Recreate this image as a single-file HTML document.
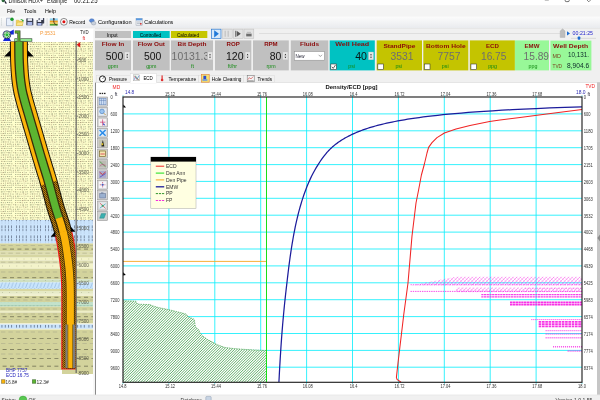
<!DOCTYPE html><html><head><meta charset="utf-8"><title>Drillsoft HDX+ Example</title><style>html,body{margin:0;padding:0;background:#f0f0f0;overflow:hidden}body{width:600px;height:400px;font-family:"Liberation Sans",sans-serif}</style></head><body><svg width="600" height="400" viewBox="0 0 600 400" font-family="Liberation Sans, Arial, sans-serif" style="display:block"><defs><filter id="soft" x="-10" y="-10" width="620" height="420" filterUnits="userSpaceOnUse" color-interpolation-filters="sRGB"><feGaussianBlur stdDeviation="0.42"/></filter></defs><g filter="url(#soft)"><rect x="-10" y="-10" width="620" height="420" fill="#f0f0f0"/>
<rect x="-10" y="-10" width="620" height="15.5" fill="#ffffff"/>
<g><circle cx="3.2" cy="0.6" r="1.6" fill="#2a6a3a"/><path d="M4 -1 L7 3.6 L5 3.6 Z" fill="#223"/></g>
<text x="8.5" y="3.1" font-size="6.4" fill="#111" textLength="34.5" lengthAdjust="spacingAndGlyphs">Drillsoft HDX+</text>
<text x="47" y="3.1" font-size="6.4" fill="#111" textLength="20" lengthAdjust="spacingAndGlyphs">Example</text>
<text x="74" y="3.1" font-size="6.4" fill="#111" textLength="23.5" lengthAdjust="spacingAndGlyphs">00:21:25</text>
<path d="M544.8 0.2 h4" stroke="#555" stroke-width="0.5" fill="none"/>
<path d="M565.2 -1 v1.6 q0 1 1 1 h2 q1 0 1 -1 v-1.6" stroke="#333" stroke-width="0.7" fill="none"/>
<path d="M586.4 -0.6 l2.4 2.4 M591.2 -0.6 l-2.4 2.4" stroke="#333" stroke-width="0.6" fill="none"/>
<rect x="-10" y="5.5" width="620" height="11" fill="#f4f4f4"/>
<text x="7" y="13" font-size="6.2" fill="#000" textLength="8.2" lengthAdjust="spacingAndGlyphs">File</text>
<text x="24" y="13" font-size="6.2" fill="#000" textLength="12.3" lengthAdjust="spacingAndGlyphs">Tools</text>
<text x="45" y="13" font-size="6.2" fill="#000" textLength="11" lengthAdjust="spacingAndGlyphs">Help</text>
<defs><linearGradient id="tb" x1="0" y1="0" x2="0" y2="1"><stop offset="0" stop-color="#fcfcfc"/><stop offset="1" stop-color="#e9ebee"/></linearGradient></defs>
<rect x="-10" y="16.5" width="620" height="11.5" fill="url(#tb)"/>
<rect x="1.2" y="18.6" width="0.7" height="0.7" fill="#9aa"/>
<rect x="1.2" y="20.6" width="0.7" height="0.7" fill="#9aa"/>
<rect x="1.2" y="22.6" width="0.7" height="0.7" fill="#9aa"/>
<rect x="1.2" y="24.6" width="0.7" height="0.7" fill="#9aa"/>
<g><path d="M6.5 18.2 h4.5 l2 2 v5.5 h-6.5z" fill="#e8f0fc" stroke="#7a8aa8" stroke-width="0.5"/><circle cx="12" cy="19.3" r="1.7" fill="#1a9a2a"/></g>
<g><path d="M16.3 20.2 h2.4 l0.8 0.9 h3 v4.4 h-6.2z" fill="#f3d35a" stroke="#c9a52a" stroke-width="0.4"/><path d="M17.4 22.2 h6 l-1.2 3.3 h-5.9z" fill="#fbe58a" stroke="#c9a52a" stroke-width="0.3"/><path d="M19.8 19.6 q2 -1.6 3.2 0.6 l0.8 -0.4 -0.4 2 -1.8 -0.8 0.7 -0.4 q-0.8 -1.4 -2.5 -1z" fill="#2aa02a"/></g>
<g><rect x="26.3" y="18.3" width="7" height="7" rx="0.6" fill="#3a3f52"/><rect x="27.6" y="18.3" width="4.4" height="2.6" fill="#e6e9f2"/><rect x="27.4" y="22" width="4.8" height="3.3" fill="#aab8e8"/></g>
<g><rect x="38.6" y="18" width="5.6" height="5.6" rx="0.5" fill="#3a3f52"/><rect x="39.6" y="18" width="3.4" height="2" fill="#e6e9f2"/><rect x="36.6" y="20" width="5.8" height="5.6" rx="0.5" fill="#2e3344"/><rect x="37.6" y="20" width="3.6" height="2" fill="#e6e9f2"/><rect x="37.5" y="23" width="4" height="2.6" fill="#aab8e8"/></g>
<rect x="46.8" y="18" width="0.5" height="8" fill="#c4c8cc"/>
<g><rect x="49.8" y="18.4" width="8" height="2.4" fill="#8ad0f0"/><rect x="49.8" y="20.6" width="8" height="2" fill="#f0a020"/><rect x="49.8" y="22.6" width="8" height="1.4" fill="#e8d060"/><rect x="49.8" y="24" width="8" height="1.6" fill="#50a030"/><path d="M53.8 18 v4 q0 2 3 3" stroke="#301010" stroke-width="0.7" fill="none"/><path d="M53 19.6 h1.8 l-0.9 -1.8z" fill="#201010"/></g>
<circle cx="63.9" cy="21.8" r="3.4" fill="#fafafa" stroke="#444" stroke-width="0.6"/><circle cx="63.9" cy="21.8" r="1.5" fill="#e01010"/>
<text x="69.2" y="24" font-size="6.2" fill="#000" textLength="16.2" lengthAdjust="spacingAndGlyphs">Record</text>
<g><ellipse cx="91.8" cy="20.6" rx="2.4" ry="1.9" fill="#5a8ad8" stroke="#3a62a8" stroke-width="0.4"/><ellipse cx="93.6" cy="23.2" rx="2.3" ry="1.8" fill="#c8d0dc" stroke="#7a8698" stroke-width="0.4"/></g>
<text x="98" y="24" font-size="6.2" fill="#000" textLength="33.6" lengthAdjust="spacingAndGlyphs">Configuration</text>
<g><rect x="136" y="18.3" width="6.2" height="7" fill="#eceef2" stroke="#8a94a4" stroke-width="0.4"/><rect x="136" y="18.3" width="6.2" height="2" fill="#5a9ae0"/><path d="M137 22 h4.2 M137 23.6 h4.2" stroke="#8a94a4" stroke-width="0.5"/><rect x="140" y="23" width="1.6" height="1.6" fill="#d04040"/></g>
<text x="144.3" y="24" font-size="6.2" fill="#000" textLength="29" lengthAdjust="spacingAndGlyphs">Calculations</text>
<rect x="0" y="28" width="600" height="0.4" fill="#d8d8d8"/>
<rect x="-10" y="28.4" width="105" height="367" fill="#ffffff"/>
<defs>
<pattern id="sand" width="29" height="13" patternUnits="userSpaceOnUse"><rect width="29" height="13" fill="#ffffcc"/>
<rect x="0.73" y="0.87" width="1.25" height="0.9" fill="#907a60" opacity="0.62"/>
<rect x="3.11" y="0.82" width="0.95" height="0.9" fill="#907a60" opacity="0.70"/>
<rect x="5.14" y="0.62" width="0.88" height="0.9" fill="#7a7a54" opacity="0.66"/>
<rect x="7.18" y="0.74" width="1.31" height="0.9" fill="#907a60" opacity="0.85"/>
<rect x="9.46" y="0.56" width="1.29" height="0.9" fill="#7a7a54" opacity="0.79"/>
<rect x="11.26" y="0.85" width="0.83" height="0.9" fill="#707058" opacity="0.43"/>
<rect x="12.91" y="0.84" width="1.15" height="0.9" fill="#707058" opacity="0.53"/>
<rect x="15.00" y="0.76" width="0.87" height="0.9" fill="#907a60" opacity="0.87"/>
<rect x="17.12" y="0.78" width="1.47" height="0.9" fill="#6a7a60" opacity="0.76"/>
<rect x="19.45" y="0.73" width="0.82" height="0.9" fill="#7a7a54" opacity="0.60"/>
<rect x="21.40" y="0.88" width="1.11" height="0.9" fill="#7a7a54" opacity="0.52"/>
<rect x="23.70" y="0.65" width="0.84" height="0.9" fill="#907a60" opacity="0.61"/>
<rect x="25.45" y="0.77" width="0.96" height="0.9" fill="#6a7a60" opacity="0.46"/>
<rect x="27.12" y="0.80" width="1.57" height="0.9" fill="#7a7a54" opacity="0.48"/>
<rect x="0.51" y="2.86" width="1.17" height="0.9" fill="#707058" opacity="0.50"/>
<rect x="2.53" y="2.97" width="1.59" height="0.9" fill="#907a60" opacity="0.71"/>
<rect x="4.67" y="2.75" width="1.14" height="0.9" fill="#6a7a60" opacity="0.81"/>
<rect x="7.03" y="3.07" width="1.27" height="0.9" fill="#7a7a54" opacity="0.51"/>
<rect x="9.07" y="2.92" width="1.48" height="0.9" fill="#7a7a54" opacity="0.44"/>
<rect x="11.12" y="2.67" width="1.15" height="0.9" fill="#707058" opacity="0.57"/>
<rect x="12.96" y="2.70" width="0.86" height="0.9" fill="#707058" opacity="0.71"/>
<rect x="15.18" y="2.72" width="1.30" height="0.9" fill="#707058" opacity="0.64"/>
<rect x="17.39" y="2.74" width="1.49" height="0.9" fill="#8a8a64" opacity="0.56"/>
<rect x="19.52" y="2.96" width="1.29" height="0.9" fill="#8a8a64" opacity="0.75"/>
<rect x="22.01" y="3.05" width="0.96" height="0.9" fill="#907a60" opacity="0.69"/>
<rect x="23.75" y="2.68" width="0.88" height="0.9" fill="#6a7a60" opacity="0.53"/>
<rect x="25.65" y="3.00" width="1.01" height="0.9" fill="#707058" opacity="0.64"/>
<rect x="0.96" y="4.88" width="1.58" height="0.9" fill="#907a60" opacity="0.67"/>
<rect x="3.68" y="4.95" width="1.29" height="0.9" fill="#8a8a64" opacity="0.76"/>
<rect x="5.48" y="4.93" width="1.13" height="0.9" fill="#7a7a54" opacity="0.50"/>
<rect x="7.35" y="4.89" width="1.26" height="0.9" fill="#6a7a60" opacity="0.48"/>
<rect x="9.42" y="5.13" width="1.06" height="0.9" fill="#707058" opacity="0.68"/>
<rect x="11.04" y="4.84" width="0.83" height="0.9" fill="#6a7a60" opacity="0.74"/>
<rect x="15.01" y="5.03" width="1.31" height="0.9" fill="#6a7a60" opacity="0.56"/>
<rect x="17.57" y="5.05" width="0.86" height="0.9" fill="#7a7a54" opacity="0.83"/>
<rect x="19.47" y="5.15" width="1.36" height="0.9" fill="#6a7a60" opacity="0.58"/>
<rect x="21.83" y="5.18" width="1.52" height="0.9" fill="#907a60" opacity="0.84"/>
<rect x="23.82" y="4.84" width="1.20" height="0.9" fill="#907a60" opacity="0.59"/>
<rect x="25.48" y="4.87" width="0.86" height="0.9" fill="#7a7a54" opacity="0.87"/>
<rect x="27.50" y="4.99" width="1.38" height="0.9" fill="#707058" opacity="0.63"/>
<rect x="0.77" y="7.21" width="1.21" height="0.9" fill="#6a7a60" opacity="0.69"/>
<rect x="2.82" y="7.28" width="0.98" height="0.9" fill="#907a60" opacity="0.77"/>
<rect x="4.78" y="7.36" width="1.19" height="0.9" fill="#6a7a60" opacity="0.56"/>
<rect x="6.96" y="7.07" width="0.96" height="0.9" fill="#6a7a60" opacity="0.72"/>
<rect x="8.73" y="7.13" width="1.51" height="0.9" fill="#6a7a60" opacity="0.51"/>
<rect x="11.04" y="7.37" width="1.44" height="0.9" fill="#8a8a64" opacity="0.59"/>
<rect x="15.16" y="7.20" width="0.91" height="0.9" fill="#7a7a54" opacity="0.74"/>
<rect x="17.28" y="7.07" width="1.02" height="0.9" fill="#907a60" opacity="0.63"/>
<rect x="19.49" y="7.15" width="1.46" height="0.9" fill="#707058" opacity="0.64"/>
<rect x="21.66" y="7.39" width="1.47" height="0.9" fill="#907a60" opacity="0.56"/>
<rect x="24.24" y="7.24" width="1.02" height="0.9" fill="#6a7a60" opacity="0.68"/>
<rect x="25.96" y="7.01" width="1.43" height="0.9" fill="#8a8a64" opacity="0.60"/>
<rect x="0.88" y="9.48" width="1.01" height="0.9" fill="#7a7a54" opacity="0.86"/>
<rect x="2.44" y="9.38" width="0.89" height="0.9" fill="#6a7a60" opacity="0.85"/>
<rect x="4.32" y="9.36" width="0.96" height="0.9" fill="#8a8a64" opacity="0.74"/>
<rect x="6.34" y="9.18" width="1.23" height="0.9" fill="#8a8a64" opacity="0.54"/>
<rect x="8.29" y="9.38" width="1.36" height="0.9" fill="#707058" opacity="0.87"/>
<rect x="10.23" y="9.45" width="1.48" height="0.9" fill="#8a8a64" opacity="0.46"/>
<rect x="12.90" y="9.22" width="1.38" height="0.9" fill="#907a60" opacity="0.51"/>
<rect x="15.00" y="9.43" width="1.24" height="0.9" fill="#707058" opacity="0.78"/>
<rect x="17.45" y="9.43" width="1.17" height="0.9" fill="#8a8a64" opacity="0.46"/>
<rect x="19.76" y="9.54" width="1.44" height="0.9" fill="#7a7a54" opacity="0.52"/>
<rect x="22.37" y="9.56" width="1.58" height="0.9" fill="#707058" opacity="0.86"/>
<rect x="25.15" y="9.46" width="1.01" height="0.9" fill="#7a7a54" opacity="0.58"/>
<rect x="26.68" y="9.39" width="1.15" height="0.9" fill="#6a7a60" opacity="0.64"/>
<rect x="0.90" y="11.65" width="0.85" height="0.9" fill="#8a8a64" opacity="0.66"/>
<rect x="2.76" y="11.52" width="1.53" height="0.9" fill="#707058" opacity="0.83"/>
<rect x="5.15" y="11.51" width="1.34" height="0.9" fill="#907a60" opacity="0.68"/>
<rect x="7.50" y="11.51" width="1.41" height="0.9" fill="#707058" opacity="0.55"/>
<rect x="9.94" y="11.54" width="1.31" height="0.9" fill="#707058" opacity="0.54"/>
<rect x="12.23" y="11.68" width="1.56" height="0.9" fill="#707058" opacity="0.51"/>
<rect x="15.48" y="11.56" width="1.22" height="0.9" fill="#8a8a64" opacity="0.60"/>
<rect x="17.25" y="11.49" width="0.80" height="0.9" fill="#707058" opacity="0.86"/>
<rect x="18.91" y="11.66" width="1.12" height="0.9" fill="#707058" opacity="0.47"/>
<rect x="20.56" y="11.71" width="0.93" height="0.9" fill="#907a60" opacity="0.61"/>
<rect x="22.71" y="11.44" width="1.54" height="0.9" fill="#907a60" opacity="0.64"/>
<rect x="24.97" y="11.71" width="1.52" height="0.9" fill="#907a60" opacity="0.66"/>
<rect x="27.02" y="11.35" width="1.14" height="0.9" fill="#6a7a60" opacity="0.48"/>
</pattern>
<pattern id="lime" width="29" height="10" patternUnits="userSpaceOnUse"><rect width="29" height="10" fill="#cbe4fc"/>
<rect x="1.60" y="2.6" width="0.65" height="0.8" fill="#1e2840" opacity="0.25"/>
<rect x="4.85" y="2.6" width="0.65" height="0.8" fill="#1e2840" opacity="0.25"/>
<rect x="8.10" y="2.6" width="0.65" height="0.8" fill="#1e2840" opacity="0.25"/>
<rect x="11.35" y="2.6" width="0.65" height="0.8" fill="#1e2840" opacity="0.25"/>
<rect x="1.60" y="5.4" width="0.65" height="2.6" fill="#1e2840" opacity="0.72"/>
<rect x="4.85" y="5.4" width="0.65" height="2.6" fill="#1e2840" opacity="0.72"/>
<rect x="8.10" y="5.4" width="0.65" height="2.6" fill="#1e2840" opacity="0.72"/>
<rect x="11.35" y="5.4" width="0.65" height="2.6" fill="#1e2840" opacity="0.72"/>
<rect x="1.60" y="8.6" width="0.65" height="1.4" fill="#1e2840" opacity="0.66"/>
<rect x="4.85" y="8.6" width="0.65" height="1.4" fill="#1e2840" opacity="0.66"/>
<rect x="8.10" y="8.6" width="0.65" height="1.4" fill="#1e2840" opacity="0.66"/>
<rect x="11.35" y="8.6" width="0.65" height="1.4" fill="#1e2840" opacity="0.66"/>
<rect x="1.60" y="0" width="0.65" height="1.2" fill="#1e2840" opacity="0.66"/>
<rect x="4.85" y="0" width="0.65" height="1.2" fill="#1e2840" opacity="0.66"/>
<rect x="8.10" y="0" width="0.65" height="1.2" fill="#1e2840" opacity="0.66"/>
<rect x="11.35" y="0" width="0.65" height="1.2" fill="#1e2840" opacity="0.66"/>
<rect x="16.10" y="2.6" width="0.65" height="0.8" fill="#1e2840" opacity="0.25"/>
<rect x="19.35" y="2.6" width="0.65" height="0.8" fill="#1e2840" opacity="0.25"/>
<rect x="22.60" y="2.6" width="0.65" height="0.8" fill="#1e2840" opacity="0.25"/>
<rect x="25.85" y="2.6" width="0.65" height="0.8" fill="#1e2840" opacity="0.25"/>
<rect x="16.10" y="5.4" width="0.65" height="2.6" fill="#1e2840" opacity="0.72"/>
<rect x="19.35" y="5.4" width="0.65" height="2.6" fill="#1e2840" opacity="0.72"/>
<rect x="22.60" y="5.4" width="0.65" height="2.6" fill="#1e2840" opacity="0.72"/>
<rect x="25.85" y="5.4" width="0.65" height="2.6" fill="#1e2840" opacity="0.72"/>
<rect x="16.10" y="8.6" width="0.65" height="1.4" fill="#1e2840" opacity="0.66"/>
<rect x="19.35" y="8.6" width="0.65" height="1.4" fill="#1e2840" opacity="0.66"/>
<rect x="22.60" y="8.6" width="0.65" height="1.4" fill="#1e2840" opacity="0.66"/>
<rect x="25.85" y="8.6" width="0.65" height="1.4" fill="#1e2840" opacity="0.66"/>
<rect x="16.10" y="0" width="0.65" height="1.2" fill="#1e2840" opacity="0.66"/>
<rect x="19.35" y="0" width="0.65" height="1.2" fill="#1e2840" opacity="0.66"/>
<rect x="22.60" y="0" width="0.65" height="1.2" fill="#1e2840" opacity="0.66"/>
<rect x="25.85" y="0" width="0.65" height="1.2" fill="#1e2840" opacity="0.66"/>
</pattern>
<pattern id="lime2" width="29" height="9" patternUnits="userSpaceOnUse"><rect width="29" height="9" fill="#c9e3fc"/>
<rect x="1.60" y="0.9" width="0.7" height="2.7" fill="#1e2840" opacity="0.7"/>
<rect x="1.60" y="5.4" width="0.7" height="2.7" fill="#1e2840" opacity="0.7"/>
<rect x="4.85" y="0.9" width="0.7" height="2.7" fill="#1e2840" opacity="0.7"/>
<rect x="4.85" y="5.4" width="0.7" height="2.7" fill="#1e2840" opacity="0.7"/>
<rect x="8.10" y="0.9" width="0.7" height="2.7" fill="#1e2840" opacity="0.7"/>
<rect x="8.10" y="5.4" width="0.7" height="2.7" fill="#1e2840" opacity="0.7"/>
<rect x="11.35" y="0.9" width="0.7" height="2.7" fill="#1e2840" opacity="0.7"/>
<rect x="11.35" y="5.4" width="0.7" height="2.7" fill="#1e2840" opacity="0.7"/>
<rect x="16.10" y="0.9" width="0.7" height="2.7" fill="#1e2840" opacity="0.7"/>
<rect x="16.10" y="5.4" width="0.7" height="2.7" fill="#1e2840" opacity="0.7"/>
<rect x="19.35" y="0.9" width="0.7" height="2.7" fill="#1e2840" opacity="0.7"/>
<rect x="19.35" y="5.4" width="0.7" height="2.7" fill="#1e2840" opacity="0.7"/>
<rect x="22.60" y="0.9" width="0.7" height="2.7" fill="#1e2840" opacity="0.7"/>
<rect x="22.60" y="5.4" width="0.7" height="2.7" fill="#1e2840" opacity="0.7"/>
<rect x="25.85" y="0.9" width="0.7" height="2.7" fill="#1e2840" opacity="0.7"/>
<rect x="25.85" y="5.4" width="0.7" height="2.7" fill="#1e2840" opacity="0.7"/>
</pattern>
<pattern id="dolo" width="3.6" height="6" patternUnits="userSpaceOnUse"><rect width="3.6" height="6" fill="#c9e5fd"/><path d="M0.4 6 L2.6 0" stroke="#9dbfe2" stroke-width="0.9"/></pattern>
<pattern id="marl" width="3.6" height="4.4" patternUnits="userSpaceOnUse"><rect width="3.6" height="4.4" fill="#c3e2cb"/><circle cx="1" cy="2.2" r="0.55" fill="#3a7a62" opacity="0.7"/><path d="M1.8 2.2 h1.4" stroke="#5a9a82" stroke-width="0.5" opacity="0.7"/></pattern>
<pattern id="cem" width="2" height="2" patternUnits="userSpaceOnUse"><rect width="2" height="2" fill="#c88a10"/><rect x="0" y="0" width="1.1" height="1.1" fill="#4a3208"/><rect x="1" y="1" width="1.1" height="1.1" fill="#6a4608"/></pattern>
<clipPath id="lithclip"><rect x="-10" y="42" width="103" height="332"/></clipPath>
</defs>
<g clip-path="url(#lithclip)">
<rect x="-10" y="42" width="103" height="178.05" fill="url(#sand)"/>
<rect x="-10" y="220" width="103" height="23.55" fill="url(#lime)"/>
<rect x="-10" y="243.5" width="103" height="8.15" fill="#d3d39c"/>
<rect x="-10" y="251.6" width="103" height="3.25" fill="#dedeb0"/>
<rect x="-10" y="254.8" width="103" height="2.85" fill="#d6d6a2"/>
<rect x="-10" y="257.6" width="103" height="2.95" fill="#f4f4c8"/>
<rect x="-10" y="260.5" width="103" height="3.35" fill="#dedeb2"/>
<rect x="-10" y="263.8" width="103" height="4.95" fill="#f3f3ca"/>
<rect x="-10" y="268.7" width="103" height="10.75" fill="#d3d39c"/>
<rect x="-10" y="279.4" width="103" height="3.05" fill="#d0e0c0"/>
<rect x="-10" y="282.4" width="103" height="6.55" fill="url(#dolo)"/>
<rect x="-10" y="288.9" width="103" height="2.15" fill="#d8d8a2"/>
<rect x="-10" y="291" width="103" height="2.85" fill="#e6eac6"/>
<rect x="-10" y="293.8" width="103" height="2.25" fill="#f0f0d0"/>
<rect x="-10" y="296" width="103" height="6.05" fill="#d3d39c"/>
<rect x="-10" y="302" width="103" height="4.75" fill="url(#marl)"/>
<rect x="-10" y="306.7" width="103" height="4.15" fill="#d3d39c"/>
<rect x="-10" y="310.8" width="103" height="1.85" fill="#eeeec6"/>
<rect x="-10" y="312.6" width="103" height="10.65" fill="#d3d39c"/>
<rect x="-10" y="323.2" width="103" height="1.25" fill="#eeeed0"/>
<rect x="-10" y="324.4" width="103" height="4.45" fill="url(#lime2)"/>
<rect x="-10" y="328.8" width="103" height="1.25" fill="#eaeac6"/>
<rect x="-10" y="330" width="103" height="44.05" fill="#d3d39c"/>
<path d="M2.6 249.1 H93" stroke="#4e4e3a" stroke-width="0.8" stroke-dasharray="4 3.4" opacity="0.75"/>
<path d="M2.6 277.7 H93" stroke="#4e4e3a" stroke-width="0.8" stroke-dasharray="4 3.4" opacity="0.75"/>
<path d="M2.6 297.3 H93" stroke="#4e4e3a" stroke-width="0.8" stroke-dasharray="4 3.4" opacity="0.75"/>
<path d="M2.6 316.7 H93" stroke="#4e4e3a" stroke-width="0.8" stroke-dasharray="4 3.4" opacity="0.75"/>
<path d="M2.6 338.4 H93" stroke="#4e4e3a" stroke-width="0.8" stroke-dasharray="4 3.4" opacity="0.75"/>
<path d="M2.6 349.5 H93" stroke="#4e4e3a" stroke-width="0.8" stroke-dasharray="4 3.4" opacity="0.75"/>
<path d="M2.6 358.6 H93" stroke="#4e4e3a" stroke-width="0.8" stroke-dasharray="4 3.4" opacity="0.75"/>
<path d="M2.6 366.2 H93" stroke="#4e4e3a" stroke-width="0.8" stroke-dasharray="4 3.4" opacity="0.75"/>
<path d="M1 245.6 H93" stroke="#a6a688" stroke-width="0.7" stroke-dasharray="4.4 3" opacity="0.8"/>
<path d="M1 253.2 H93" stroke="#a6a688" stroke-width="0.7" stroke-dasharray="4.4 3" opacity="0.8"/>
<path d="M1 262.2 H93" stroke="#a6a688" stroke-width="0.7" stroke-dasharray="4.4 3" opacity="0.8"/>
<path d="M1 272 H93" stroke="#a6a688" stroke-width="0.7" stroke-dasharray="4.4 3" opacity="0.8"/>
<path d="M1 300 H93" stroke="#a6a688" stroke-width="0.7" stroke-dasharray="4.4 3" opacity="0.8"/>
<path d="M1 309 H93" stroke="#a6a688" stroke-width="0.7" stroke-dasharray="4.4 3" opacity="0.8"/>
<path d="M1 314 H93" stroke="#a6a688" stroke-width="0.7" stroke-dasharray="4.4 3" opacity="0.8"/>
<path d="M1 319.6 H93" stroke="#a6a688" stroke-width="0.7" stroke-dasharray="4.4 3" opacity="0.8"/>
<path d="M1 332 H93" stroke="#a6a688" stroke-width="0.7" stroke-dasharray="4.4 3" opacity="0.8"/>
<path d="M1 343.6 H93" stroke="#a6a688" stroke-width="0.7" stroke-dasharray="4.4 3" opacity="0.8"/>
<path d="M1 354 H93" stroke="#a6a688" stroke-width="0.7" stroke-dasharray="4.4 3" opacity="0.8"/>
<path d="M2 259 H93" stroke="#6a6a50" stroke-width="0.6" stroke-dasharray="0.8 6.4" opacity="0.6"/>
<path d="M2 266 H93" stroke="#6a6a50" stroke-width="0.6" stroke-dasharray="0.8 6.4" opacity="0.6"/>
<path d="M2 280.6 H93" stroke="#6a6a50" stroke-width="0.6" stroke-dasharray="0.8 6.4" opacity="0.6"/>
<path d="M2 292.4 H93" stroke="#6a6a50" stroke-width="0.6" stroke-dasharray="0.8 6.4" opacity="0.6"/>
</g>
<rect x="-10" y="370" width="72" height="6" fill="#ffffff"/>
<clipPath id="wellclip"><rect x="0" y="28" width="75.8" height="350"/></clipPath><g clip-path="url(#wellclip)">
<path d="M9.90 41.50 L9.90 43.52 L9.91 45.54 L9.92 47.56 L9.93 49.57 L9.95 51.59 L9.97 53.60 L9.99 55.61 L10.03 57.69 L10.08 59.79 L10.16 61.87 L10.25 63.93 L10.36 65.98 L10.47 68.01 L10.59 70.03 L10.72 72.13 L10.88 74.25 L11.07 76.35 L11.28 78.43 L11.50 80.49 L11.75 82.61 L12.03 84.75 L12.34 86.87 L12.68 88.99 L13.05 91.11 L13.49 93.35 L13.98 95.56 L14.51 97.70 L15.04 99.77 L15.56 101.77 L16.11 103.84 L16.68 105.92 L17.26 107.99 L17.86 110.03 L18.45 112.05 L19.04 114.05 L19.63 116.03 L20.20 118.01 L20.79 120.02 L21.38 122.03 L21.96 124.04 L22.55 126.04 L23.14 128.04 L23.73 130.04 L24.32 132.03 L24.90 134.03 L25.49 136.02 L26.07 138.02 L26.65 140.02 L27.23 142.02 L27.82 144.02 L28.40 146.02 L28.98 148.02 L29.57 150.03 L30.16 152.03 L30.75 154.04 L31.34 156.05 L31.93 158.06 L32.53 160.07 L33.13 162.08 L33.74 164.11 L34.36 166.14 L34.98 168.16 L35.60 170.16 L36.22 172.17 L36.84 174.16 L37.45 176.14 L38.05 178.11 L38.64 180.07 L39.22 182.03 L39.78 183.97 L40.33 185.93 L40.88 187.89 L41.41 189.86 L41.95 191.83 L42.48 193.82 L43.01 195.82 L43.55 197.82 L44.08 199.83 L44.63 201.85 L45.18 203.88 L45.75 205.92 L46.33 207.97 L46.92 210.02 L47.53 212.09 L48.19 214.23 L48.88 216.35 L49.58 218.41 L50.27 220.42 L50.94 222.38 L51.57 224.28 L52.15 226.12 L52.69 227.97 L53.24 229.93 L53.79 231.88 L54.31 233.81 L54.43 234.29 L71.84 229.71 L71.70 229.19 L71.14 227.12 L70.57 225.07 L70.00 223.03 L69.37 220.88 L68.69 218.72 L67.99 216.62 L67.29 214.58 L66.61 212.59 L65.96 210.65 L65.34 208.77 L64.77 206.91 L64.20 204.98 L63.63 203.03 L63.08 201.08 L62.54 199.12 L62.00 197.15 L61.47 195.17 L60.94 193.18 L60.40 191.18 L59.87 189.18 L59.33 187.17 L58.79 185.14 L58.23 183.11 L57.67 181.07 L57.09 179.03 L56.49 176.97 L55.89 174.93 L55.27 172.89 L54.66 170.86 L54.03 168.84 L53.41 166.83 L52.79 164.84 L52.18 162.84 L51.57 160.86 L50.97 158.89 L50.37 156.92 L49.78 154.93 L49.19 152.94 L48.60 150.95 L48.01 148.96 L47.43 146.97 L46.85 144.97 L46.26 142.98 L45.68 140.98 L45.10 138.98 L44.51 136.98 L43.93 134.98 L43.35 132.98 L42.76 130.98 L42.18 128.97 L41.59 126.97 L41.00 124.96 L40.41 122.96 L39.82 120.96 L39.23 118.96 L38.65 116.97 L38.07 114.98 L37.49 112.99 L36.90 110.97 L36.30 108.95 L35.71 106.95 L35.13 104.97 L34.56 103.01 L34.01 101.08 L33.49 99.16 L32.98 97.23 L32.45 95.23 L31.96 93.30 L31.50 91.44 L31.10 89.65 L30.76 87.89 L30.43 86.01 L30.13 84.13 L29.86 82.25 L29.61 80.39 L29.39 78.51 L29.18 76.57 L28.99 74.65 L28.82 72.75 L28.68 70.87 L28.55 68.97 L28.44 66.99 L28.33 65.02 L28.23 63.07 L28.14 61.13 L28.07 59.21 L28.02 57.31 L27.99 55.39 L27.97 53.40 L27.95 51.41 L27.93 49.43 L27.92 47.44 L27.91 45.46 L27.90 43.48 L27.90 41.50Z" fill="#1a1408"/>
<path d="M10.90 41.80 L10.90 43.82 L10.91 45.84 L10.92 47.85 L10.94 49.87 L10.95 51.88 L10.97 53.89 L11.00 55.90 L11.03 57.98 L11.09 60.07 L11.17 62.14 L11.27 64.19 L11.37 66.23 L11.48 68.26 L11.60 70.27 L11.74 72.38 L11.91 74.48 L12.10 76.57 L12.30 78.64 L12.53 80.69 L12.78 82.81 L13.06 84.92 L13.38 87.04 L13.72 89.14 L14.09 91.24 L14.54 93.47 L15.03 95.65 L15.55 97.77 L16.09 99.82 L16.61 101.82 L17.16 103.89 L17.73 105.96 L18.31 108.02 L18.90 110.05 L19.50 112.07 L20.09 114.07 L20.67 116.05 L21.25 118.03 L21.84 120.04 L22.42 122.05 L23.01 124.06 L23.60 126.06 L24.19 128.06 L24.78 130.06 L25.36 132.05 L25.95 134.05 L26.53 136.04 L27.12 138.04 L27.70 140.04 L28.28 142.04 L28.86 144.04 L29.45 146.04 L30.03 148.04 L30.62 150.05 L31.20 152.05 L31.79 154.06 L32.38 156.06 L32.98 158.07 L33.58 160.08 L34.18 162.09 L34.79 164.12 L35.41 166.15 L36.03 168.16 L36.65 170.17 L37.27 172.17 L37.88 174.16 L38.49 176.14 L39.09 178.12 L39.68 180.08 L40.26 182.04 L40.82 183.99 L41.38 185.95 L41.43 186.15 L56.84 181.85 L56.79 181.65 L56.21 179.61 L55.62 177.56 L55.02 175.52 L54.41 173.48 L53.79 171.46 L53.17 169.44 L52.55 167.43 L51.93 165.43 L51.31 163.44 L50.70 161.45 L50.10 159.48 L49.50 157.51 L48.91 155.52 L48.32 153.53 L47.73 151.54 L47.14 149.54 L46.56 147.55 L45.97 145.55 L45.39 143.56 L44.81 141.56 L44.22 139.56 L43.64 137.56 L43.06 135.56 L42.48 133.56 L41.89 131.56 L41.31 129.55 L40.72 127.55 L40.13 125.54 L39.54 123.54 L38.95 121.54 L38.36 119.54 L37.78 117.55 L37.19 115.56 L36.61 113.57 L36.03 111.55 L35.43 109.53 L34.84 107.53 L34.26 105.55 L33.69 103.58 L33.13 101.64 L32.60 99.71 L32.09 97.78 L31.56 95.78 L31.06 93.83 L30.60 91.95 L30.18 90.13 L29.83 88.36 L29.50 86.46 L29.19 84.56 L28.90 82.68 L28.65 80.79 L28.43 78.91 L28.22 76.96 L28.02 75.03 L27.85 73.12 L27.70 71.22 L27.57 69.33 L27.46 67.34 L27.35 65.37 L27.25 63.41 L27.16 61.46 L27.08 59.53 L27.03 57.62 L27.00 55.70 L26.97 53.71 L26.95 51.72 L26.93 49.73 L26.92 47.75 L26.91 45.76 L26.90 43.78 L26.90 41.80Z" fill="#fbb40a"/>
<path d="M41.16 185.17 L41.70 187.13 L42.24 189.10 L42.78 191.08 L43.31 193.07 L43.84 195.06 L44.38 197.06 L44.91 199.07 L45.46 201.09 L46.01 203.11 L46.57 205.14 L47.14 207.18 L47.73 209.23 L48.33 211.29 L48.97 213.39 L49.66 215.51 L50.35 217.58 L51.04 219.60 L51.72 221.57 L52.36 223.50 L52.96 225.37 L53.51 227.20 L54.07 229.17 L54.62 231.13 L55.14 233.07 L55.40 234.03 L70.87 229.97 L70.60 228.93 L70.04 226.87 L69.47 224.83 L68.89 222.80 L68.24 220.63 L67.56 218.50 L66.87 216.43 L66.18 214.40 L65.50 212.42 L64.85 210.49 L64.24 208.61 L63.67 206.71 L63.09 204.77 L62.53 202.82 L61.98 200.86 L61.44 198.89 L60.90 196.91 L60.37 194.93 L59.84 192.94 L59.31 190.94 L58.77 188.93 L58.23 186.92 L57.68 184.90 L57.13 182.87 L56.56 180.83Z" fill="url(#cem)"/>
<path d="M54.68 235.24 L55.15 237.12 L55.59 238.98 L55.98 240.82 L56.35 242.68 L56.70 244.58 L57.03 246.49 L57.34 248.41 L57.64 250.35 L57.93 252.29 L58.21 254.25 L58.48 256.22 L58.76 258.23 L59.03 260.21 L59.29 262.17 L59.54 264.11 L59.77 266.02 L59.97 267.92 L60.15 269.79 L60.31 271.71 L60.46 273.69 L60.61 275.65 L60.75 277.60 L60.87 279.52 L60.97 281.43 L61.05 283.32 L61.10 285.20 L61.14 287.19 L61.18 289.17 L61.22 291.15 L61.25 293.12 L61.27 295.09 L61.29 297.06 L61.30 299.02 L61.30 301.00 L61.30 303.00 L61.30 305.00 L61.30 307.00 L61.30 309.00 L61.30 311.00 L61.30 313.00 L61.30 315.00 L61.30 317.00 L61.30 319.00 L61.30 321.00 L61.30 323.00 L61.30 325.00 L61.30 327.00 L61.30 329.00 L61.30 331.00 L61.30 333.00 L61.30 335.00 L61.30 337.00 L61.30 339.00 L61.30 341.00 L61.30 343.00 L61.30 345.00 L61.30 347.00 L61.30 349.00 L61.30 351.00 L61.30 353.00 L61.30 355.00 L61.30 357.00 L61.30 359.00 L61.30 361.00 L61.30 363.00 L61.30 365.00 L61.30 367.00 L61.30 369.00 L61.30 369.60 L79.30 369.60 L79.30 369.00 L79.30 367.00 L79.30 365.00 L79.30 363.00 L79.30 361.00 L79.30 359.00 L79.30 357.00 L79.30 355.00 L79.30 353.00 L79.30 351.00 L79.30 349.00 L79.30 347.00 L79.30 345.00 L79.30 343.00 L79.30 341.00 L79.30 339.00 L79.30 337.00 L79.30 335.00 L79.30 333.00 L79.30 331.00 L79.30 329.00 L79.30 327.00 L79.30 325.00 L79.30 323.00 L79.30 321.00 L79.30 319.00 L79.30 317.00 L79.30 315.00 L79.30 313.00 L79.30 311.00 L79.30 309.00 L79.30 307.00 L79.30 305.00 L79.30 303.00 L79.30 301.00 L79.30 298.98 L79.29 296.94 L79.27 294.91 L79.25 292.88 L79.22 290.85 L79.18 288.83 L79.14 286.81 L79.10 284.80 L79.04 282.68 L78.95 280.57 L78.84 278.48 L78.71 276.40 L78.56 274.35 L78.41 272.31 L78.25 270.29 L78.08 268.21 L77.88 266.08 L77.65 263.98 L77.40 261.89 L77.14 259.83 L76.87 257.79 L76.59 255.77 L76.32 253.78 L76.04 251.75 L75.74 249.71 L75.44 247.65 L75.12 245.59 L74.78 243.51 L74.42 241.42 L74.04 239.32 L73.61 237.18 L73.14 235.02 L72.64 232.88 L72.11 230.76Z" fill="#f0181a"/>
<path d="M55.24 233.04 L55.74 234.96 L56.22 236.86 L56.66 238.74 L57.06 240.60 L57.43 242.47 L57.78 244.38 L58.11 246.31 L58.43 248.24 L58.73 250.18 L59.02 252.13 L59.30 254.10 L59.57 256.07 L59.85 258.08 L60.12 260.06 L60.38 262.02 L60.63 263.97 L60.86 265.90 L61.07 267.80 L61.25 269.69 L61.40 271.63 L61.56 273.61 L61.71 275.57 L61.84 277.52 L61.96 279.46 L62.07 281.38 L62.15 283.28 L62.20 285.17 L62.24 287.16 L62.28 289.15 L62.32 291.13 L62.35 293.11 L62.37 295.08 L62.39 297.05 L62.40 299.02 L62.40 301.00 L62.40 303.00 L62.40 305.00 L62.40 307.00 L62.40 309.00 L62.40 311.00 L62.40 313.00 L62.40 315.00 L62.40 317.00 L62.40 319.00 L62.40 321.00 L62.40 323.00 L62.40 325.00 L62.40 327.00 L62.40 329.00 L62.40 331.00 L62.40 333.00 L62.40 335.00 L62.40 337.00 L62.40 339.00 L62.40 341.00 L62.40 343.00 L62.40 345.00 L62.40 347.00 L62.40 349.00 L62.40 351.00 L62.40 353.00 L62.40 355.00 L62.40 357.00 L62.40 359.00 L62.40 361.00 L62.40 363.00 L62.40 365.00 L62.40 367.00 L62.40 368.60 L78.20 368.60 L78.20 367.00 L78.20 365.00 L78.20 363.00 L78.20 361.00 L78.20 359.00 L78.20 357.00 L78.20 355.00 L78.20 353.00 L78.20 351.00 L78.20 349.00 L78.20 347.00 L78.20 345.00 L78.20 343.00 L78.20 341.00 L78.20 339.00 L78.20 337.00 L78.20 335.00 L78.20 333.00 L78.20 331.00 L78.20 329.00 L78.20 327.00 L78.20 325.00 L78.20 323.00 L78.20 321.00 L78.20 319.00 L78.20 317.00 L78.20 315.00 L78.20 313.00 L78.20 311.00 L78.20 309.00 L78.20 307.00 L78.20 305.00 L78.20 303.00 L78.20 301.00 L78.20 298.98 L78.19 296.95 L78.17 294.92 L78.15 292.89 L78.12 290.87 L78.08 288.85 L78.04 286.84 L78.00 284.83 L77.94 282.72 L77.85 280.62 L77.74 278.54 L77.61 276.48 L77.47 274.43 L77.31 272.39 L77.15 270.37 L76.99 268.31 L76.78 266.20 L76.56 264.10 L76.31 262.03 L76.05 259.98 L75.78 257.94 L75.50 255.92 L75.23 253.93 L74.95 251.90 L74.66 249.87 L74.35 247.82 L74.03 245.76 L73.70 243.69 L73.34 241.62 L72.95 239.53 L72.53 237.40 L72.07 235.26 L71.57 233.14 L71.05 231.04 L70.50 228.96Z" fill="url(#cem)"/>
<path d="M14.10 41.50 L14.10 43.51 L14.11 45.52 L14.12 47.53 L14.13 49.54 L14.15 51.55 L14.17 53.55 L14.19 55.56 L14.23 57.60 L14.28 59.65 L14.36 61.70 L14.45 63.73 L14.55 65.76 L14.66 67.77 L14.78 69.78 L14.91 71.84 L15.07 73.90 L15.25 75.95 L15.45 78.00 L15.67 80.03 L15.91 82.09 L16.19 84.16 L16.49 86.23 L16.83 88.30 L17.19 90.36 L17.60 92.48 L18.07 94.60 L18.58 96.67 L19.10 98.71 L19.63 100.71 L20.16 102.75 L20.72 104.79 L21.30 106.83 L21.89 108.85 L22.48 110.86 L23.07 112.86 L23.66 114.85 L24.24 116.84 L24.82 118.85 L25.41 120.85 L25.99 122.85 L26.58 124.86 L27.17 126.86 L27.76 128.85 L28.35 130.85 L28.93 132.85 L29.52 134.85 L30.10 136.84 L30.68 138.84 L31.27 140.84 L31.85 142.84 L32.43 144.84 L33.02 146.85 L33.60 148.85 L34.19 150.85 L34.77 152.85 L35.37 154.86 L35.96 156.86 L36.55 158.87 L37.15 160.88 L37.76 162.89 L38.37 164.91 L38.99 166.92 L39.61 168.92 L40.23 170.92 L40.85 172.92 L41.46 174.91 L42.07 176.89 L42.66 178.87 L43.25 180.85 L43.82 182.82 L44.38 184.79 L44.93 186.77 L45.47 188.76 L46.00 190.75 L46.54 192.74 L47.07 194.74 L47.60 196.74 L48.14 198.74 L48.68 200.76 L49.23 202.77 L49.79 204.79 L50.36 206.82 L50.95 208.85 L51.55 210.88 L52.19 212.96 L52.87 215.02 L53.55 217.05 L54.24 219.06 L54.92 221.03 L55.56 222.98 L56.17 224.90 L56.73 226.81 L57.29 228.80 L57.84 230.77 L58.37 232.73 L58.49 233.22 L67.78 230.78 L67.64 230.27 L67.09 228.23 L66.53 226.20 L65.96 224.19 L65.35 222.10 L64.69 220.02 L64.01 217.97 L63.32 215.94 L62.64 213.95 L61.97 211.98 L61.34 210.04 L60.75 208.12 L60.16 206.15 L59.60 204.18 L59.04 202.21 L58.49 200.23 L57.95 198.24 L57.41 196.26 L56.88 194.26 L56.35 192.26 L55.81 190.26 L55.28 188.25 L54.73 186.24 L54.18 184.23 L53.62 182.21 L53.05 180.18 L52.46 178.15 L51.86 176.13 L51.25 174.11 L50.64 172.09 L50.02 170.08 L49.40 168.08 L48.78 166.08 L48.16 164.08 L47.55 162.09 L46.95 160.11 L46.35 158.12 L45.75 156.13 L45.16 154.14 L44.57 152.14 L43.99 150.15 L43.40 148.15 L42.81 146.15 L42.23 144.15 L41.65 142.16 L41.07 140.16 L40.48 138.16 L39.90 136.16 L39.32 134.16 L38.73 132.15 L38.15 130.15 L37.56 128.15 L36.97 126.15 L36.38 124.14 L35.79 122.14 L35.20 120.15 L34.62 118.15 L34.04 116.15 L33.45 114.16 L32.87 112.15 L32.28 110.14 L31.69 108.14 L31.10 106.15 L30.53 104.17 L29.97 102.21 L29.43 100.25 L28.91 98.29 L28.39 96.29 L27.89 94.33 L27.41 92.40 L26.99 90.52 L26.63 88.64 L26.29 86.70 L25.98 84.77 L25.70 82.84 L25.44 80.91 L25.21 78.97 L25.00 77.00 L24.81 75.05 L24.63 73.10 L24.49 71.16 L24.36 69.22 L24.25 67.23 L24.14 65.24 L24.04 63.27 L23.95 61.30 L23.88 59.35 L23.82 57.40 L23.79 55.44 L23.77 53.45 L23.75 51.45 L23.73 49.46 L23.72 47.47 L23.71 45.48 L23.70 43.49 L23.70 41.50Z" fill="#3a2c08"/>
<path d="M58.88 233.12 L59.38 235.07 L59.85 237.01 L60.29 238.93 L60.68 240.85 L61.05 242.79 L61.40 244.75 L61.73 246.71 L62.04 248.67 L62.34 250.64 L62.63 252.62 L62.90 254.60 L63.18 256.60 L63.45 258.60 L63.72 260.58 L63.98 262.56 L64.22 264.52 L64.45 266.48 L64.64 268.42 L64.81 270.35 L64.97 272.34 L65.13 274.33 L65.27 276.31 L65.40 278.27 L65.51 280.23 L65.61 282.19 L65.68 284.13 L65.72 286.09 L65.76 288.09 L65.80 290.08 L65.83 292.07 L65.86 294.05 L65.88 296.04 L65.90 298.02 L65.90 300.00 L65.90 302.00 L65.90 304.00 L65.90 306.00 L65.90 308.00 L65.90 310.00 L65.90 312.00 L65.90 314.00 L65.90 316.00 L65.90 318.00 L65.90 320.00 L65.90 322.00 L65.90 324.00 L65.90 326.00 L65.90 328.00 L65.90 330.00 L65.90 332.00 L65.90 334.00 L65.90 336.00 L65.90 338.00 L65.90 340.00 L65.90 342.00 L65.90 344.00 L65.90 346.00 L65.90 348.00 L65.90 350.00 L65.90 352.00 L65.90 354.00 L65.90 356.00 L65.90 358.00 L65.90 360.00 L65.90 362.00 L65.90 364.00 L65.90 366.00 L65.90 368.00 L65.90 368.40 L74.70 368.40 L74.70 368.00 L74.70 366.00 L74.70 364.00 L74.70 362.00 L74.70 360.00 L74.70 358.00 L74.70 356.00 L74.70 354.00 L74.70 352.00 L74.70 350.00 L74.70 348.00 L74.70 346.00 L74.70 344.00 L74.70 342.00 L74.70 340.00 L74.70 338.00 L74.70 336.00 L74.70 334.00 L74.70 332.00 L74.70 330.00 L74.70 328.00 L74.70 326.00 L74.70 324.00 L74.70 322.00 L74.70 320.00 L74.70 318.00 L74.70 316.00 L74.70 314.00 L74.70 312.00 L74.70 310.00 L74.70 308.00 L74.70 306.00 L74.70 304.00 L74.70 302.00 L74.70 300.00 L74.70 297.98 L74.68 295.96 L74.66 293.95 L74.63 291.93 L74.60 289.92 L74.56 287.91 L74.52 285.91 L74.47 283.87 L74.40 281.81 L74.30 279.77 L74.18 277.73 L74.05 275.69 L73.90 273.67 L73.75 271.66 L73.59 269.65 L73.40 267.58 L73.19 265.52 L72.96 263.48 L72.71 261.44 L72.44 259.42 L72.17 257.40 L71.90 255.40 L71.62 253.40 L71.34 251.38 L71.04 249.36 L70.74 247.33 L70.41 245.29 L70.07 243.25 L69.71 241.21 L69.32 239.15 L68.89 237.07 L68.42 234.99 L67.92 232.93 L67.39 230.88Z" fill="#4a3808"/>
<path d="M15.40 41.50 L15.40 43.51 L15.41 45.51 L15.42 47.52 L15.43 49.53 L15.45 51.53 L15.47 53.54 L15.49 55.54 L15.53 57.57 L15.58 59.61 L15.66 61.64 L15.75 63.67 L15.85 65.69 L15.96 67.70 L16.08 69.71 L16.21 71.75 L16.36 73.79 L16.55 75.83 L16.75 77.86 L16.97 79.89 L17.20 81.93 L17.48 83.98 L17.78 86.03 L18.11 88.08 L18.46 90.12 L18.87 92.22 L19.34 94.30 L19.84 96.36 L20.36 98.38 L20.88 100.38 L21.42 102.41 L21.98 104.44 L22.55 106.47 L23.13 108.48 L23.73 110.49 L24.32 112.49 L24.90 114.49 L25.48 116.48 L26.07 118.48 L26.65 120.48 L27.24 122.49 L27.83 124.49 L28.42 126.49 L29.01 128.49 L29.59 130.49 L30.18 132.48 L30.76 134.48 L31.35 136.48 L31.93 138.48 L32.51 140.48 L33.10 142.48 L33.68 144.48 L34.26 146.48 L34.85 148.48 L35.43 150.48 L36.02 152.49 L36.61 154.49 L37.20 156.49 L37.80 158.50 L38.40 160.50 L39.00 162.51 L39.61 164.53 L40.23 166.53 L40.85 168.54 L41.47 170.54 L42.09 172.53 L42.70 174.53 L43.31 176.52 L43.91 178.50 L44.49 180.48 L45.07 182.46 L45.63 184.44 L46.18 186.43 L46.72 188.42 L47.26 190.41 L47.79 192.40 L48.33 194.40 L48.86 196.40 L49.40 198.41 L49.94 200.42 L50.49 202.43 L51.04 204.44 L51.61 206.46 L52.20 208.48 L52.80 210.51 L53.43 212.56 L54.10 214.61 L54.78 216.63 L55.47 218.64 L55.64 219.13 L62.26 216.87 L62.09 216.36 L61.41 214.37 L60.74 212.39 L60.10 210.44 L59.50 208.49 L58.92 206.52 L58.35 204.54 L57.79 202.56 L57.24 200.57 L56.69 198.58 L56.16 196.59 L55.62 194.60 L55.09 192.60 L54.56 190.60 L54.02 188.59 L53.48 186.58 L52.93 184.57 L52.37 182.56 L51.80 180.54 L51.21 178.52 L50.62 176.50 L50.01 174.48 L49.40 172.47 L48.78 170.47 L48.16 168.46 L47.54 166.46 L46.92 164.47 L46.31 162.47 L45.70 160.49 L45.10 158.50 L44.51 156.50 L43.92 154.51 L43.33 152.51 L42.74 150.51 L42.15 148.52 L41.57 146.52 L40.98 144.52 L40.40 142.52 L39.82 140.52 L39.23 138.52 L38.65 136.52 L38.07 134.52 L37.48 132.52 L36.90 130.52 L36.31 128.51 L35.72 126.51 L35.13 124.51 L34.55 122.51 L33.96 120.51 L33.37 118.52 L32.79 116.52 L32.21 114.52 L31.62 112.51 L31.03 110.51 L30.44 108.51 L29.85 106.52 L29.28 104.53 L28.72 102.56 L28.18 100.59 L27.66 98.62 L27.13 96.62 L26.63 94.64 L26.15 92.70 L25.72 90.78 L25.35 88.88 L25.01 86.92 L24.70 84.97 L24.41 83.02 L24.15 81.07 L23.92 79.11 L23.71 77.14 L23.51 75.17 L23.34 73.21 L23.19 71.25 L23.06 69.29 L22.95 67.30 L22.84 65.31 L22.74 63.33 L22.65 61.36 L22.58 59.39 L22.52 57.43 L22.49 55.46 L22.47 53.46 L22.45 51.47 L22.43 49.47 L22.42 47.48 L22.41 45.49 L22.40 43.49 L22.40 41.50Z" fill="#5cb531"/>
<path d="M55.57 218.93 L56.25 220.91 L56.89 222.87 L57.50 224.81 L58.06 226.76 L58.62 228.74 L59.17 230.72 L59.70 232.69 L59.75 232.89 L66.52 231.11 L66.47 230.91 L65.92 228.88 L65.36 226.86 L64.79 224.84 L64.20 222.79 L63.55 220.73 L62.88 218.69 L62.20 216.67Z" fill="#fbb40a"/>
<path d="M59.53 232.42 L60.03 234.38 L60.51 236.34 L60.96 238.28 L61.37 240.21 L61.75 242.16 L62.10 244.12 L62.44 246.09 L62.75 248.06 L63.06 250.03 L63.35 252.01 L63.63 254.00 L63.90 255.99 L64.18 257.99 L64.45 259.98 L64.71 261.96 L64.96 263.93 L65.19 265.90 L65.39 267.85 L65.57 269.80 L65.73 271.78 L65.89 273.77 L66.03 275.76 L66.17 277.73 L66.29 279.70 L66.38 281.66 L66.46 283.62 L66.51 285.58 L66.55 287.57 L66.59 289.57 L66.63 291.56 L66.66 293.55 L66.68 295.53 L66.69 297.52 L66.70 299.50 L66.70 301.50 L66.70 303.50 L66.70 305.50 L66.70 307.50 L66.70 309.50 L66.70 311.50 L66.70 313.50 L66.70 315.50 L66.70 317.50 L66.70 319.50 L66.70 321.50 L66.70 323.50 L66.70 325.50 L66.70 327.50 L66.70 329.50 L66.70 331.50 L66.70 333.50 L66.70 335.50 L66.70 337.50 L66.70 339.50 L66.70 341.50 L66.70 343.50 L66.70 345.50 L66.70 347.50 L66.70 349.50 L66.70 351.50 L66.70 353.50 L66.70 355.50 L66.70 357.50 L66.70 359.50 L66.70 361.50 L66.70 363.50 L66.70 365.50 L66.70 367.50 L66.70 368.00 L73.90 368.00 L73.90 367.50 L73.90 365.50 L73.90 363.50 L73.90 361.50 L73.90 359.50 L73.90 357.50 L73.90 355.50 L73.90 353.50 L73.90 351.50 L73.90 349.50 L73.90 347.50 L73.90 345.50 L73.90 343.50 L73.90 341.50 L73.90 339.50 L73.90 337.50 L73.90 335.50 L73.90 333.50 L73.90 331.50 L73.90 329.50 L73.90 327.50 L73.90 325.50 L73.90 323.50 L73.90 321.50 L73.90 319.50 L73.90 317.50 L73.90 315.50 L73.90 313.50 L73.90 311.50 L73.90 309.50 L73.90 307.50 L73.90 305.50 L73.90 303.50 L73.90 301.50 L73.90 299.50 L73.89 297.48 L73.88 295.47 L73.85 293.45 L73.83 291.44 L73.79 289.43 L73.75 287.43 L73.71 285.42 L73.66 283.38 L73.58 281.34 L73.47 279.30 L73.35 277.27 L73.21 275.24 L73.06 273.23 L72.91 271.22 L72.75 269.20 L72.56 267.15 L72.34 265.10 L72.10 263.07 L71.85 261.04 L71.58 259.02 L71.31 257.01 L71.04 255.01 L70.76 253.00 L70.47 250.99 L70.18 248.97 L69.87 246.94 L69.54 244.91 L69.19 242.88 L68.83 240.84 L68.43 238.79 L67.99 236.72 L67.52 234.66 L67.01 232.62 L66.48 230.58Z" fill="#fbb40a"/>
<path d="M65.50 324.50 L65.50 326.50 L65.50 328.50 L65.50 330.50 L65.50 332.50 L65.50 334.50 L65.50 336.50 L65.50 338.50 L65.50 340.50 L65.50 342.50 L65.50 344.50 L65.50 346.50 L65.50 348.50 L65.50 350.50 L65.50 352.50 L65.50 354.50 L65.50 356.50 L65.50 358.50 L65.50 360.50 L65.50 362.50 L65.50 364.50 L65.50 366.50 L65.50 368.00 L67.70 368.00 L67.70 366.50 L67.70 364.50 L67.70 362.50 L67.70 360.50 L67.70 358.50 L67.70 356.50 L67.70 354.50 L67.70 352.50 L67.70 350.50 L67.70 348.50 L67.70 346.50 L67.70 344.50 L67.70 342.50 L67.70 340.50 L67.70 338.50 L67.70 336.50 L67.70 334.50 L67.70 332.50 L67.70 330.50 L67.70 328.50 L67.70 326.50 L67.70 324.50Z" fill="#7c7c7c"/>
<path d="M72.90 324.50 L72.90 326.50 L72.90 328.50 L72.90 330.50 L72.90 332.50 L72.90 334.50 L72.90 336.50 L72.90 338.50 L72.90 340.50 L72.90 342.50 L72.90 344.50 L72.90 346.50 L72.90 348.50 L72.90 350.50 L72.90 352.50 L72.90 354.50 L72.90 356.50 L72.90 358.50 L72.90 360.50 L72.90 362.50 L72.90 364.50 L72.90 366.50 L72.90 368.00 L75.10 368.00 L75.10 366.50 L75.10 364.50 L75.10 362.50 L75.10 360.50 L75.10 358.50 L75.10 356.50 L75.10 354.50 L75.10 352.50 L75.10 350.50 L75.10 348.50 L75.10 346.50 L75.10 344.50 L75.10 342.50 L75.10 340.50 L75.10 338.50 L75.10 336.50 L75.10 334.50 L75.10 332.50 L75.10 330.50 L75.10 328.50 L75.10 326.50 L75.10 324.50Z" fill="#7c7c7c"/>
<path d="M67.70 324.50 L67.70 326.50 L67.70 328.50 L67.70 330.50 L67.70 332.50 L67.70 334.50 L67.70 336.50 L67.70 338.50 L67.70 340.50 L67.70 342.50 L67.70 344.50 L67.70 346.50 L67.70 348.50 L67.70 350.50 L67.70 352.50 L67.70 354.50 L67.70 356.50 L67.70 358.50 L67.70 360.50 L67.70 362.50 L67.70 364.50 L67.70 366.50 L67.70 368.00 L68.20 368.00 L68.20 366.50 L68.20 364.50 L68.20 362.50 L68.20 360.50 L68.20 358.50 L68.20 356.50 L68.20 354.50 L68.20 352.50 L68.20 350.50 L68.20 348.50 L68.20 346.50 L68.20 344.50 L68.20 342.50 L68.20 340.50 L68.20 338.50 L68.20 336.50 L68.20 334.50 L68.20 332.50 L68.20 330.50 L68.20 328.50 L68.20 326.50 L68.20 324.50Z" fill="#4a3808"/>
<path d="M72.40 324.50 L72.40 326.50 L72.40 328.50 L72.40 330.50 L72.40 332.50 L72.40 334.50 L72.40 336.50 L72.40 338.50 L72.40 340.50 L72.40 342.50 L72.40 344.50 L72.40 346.50 L72.40 348.50 L72.40 350.50 L72.40 352.50 L72.40 354.50 L72.40 356.50 L72.40 358.50 L72.40 360.50 L72.40 362.50 L72.40 364.50 L72.40 366.50 L72.40 368.00 L72.90 368.00 L72.90 366.50 L72.90 364.50 L72.90 362.50 L72.90 360.50 L72.90 358.50 L72.90 356.50 L72.90 354.50 L72.90 352.50 L72.90 350.50 L72.90 348.50 L72.90 346.50 L72.90 344.50 L72.90 342.50 L72.90 340.50 L72.90 338.50 L72.90 336.50 L72.90 334.50 L72.90 332.50 L72.90 330.50 L72.90 328.50 L72.90 326.50 L72.90 324.50Z" fill="#4a3808"/>
</g>
<path d="M4.2 56.4 L10.6 50 L10.6 56.4Z" fill="#000"/><path d="M33.7 56.4 L27.4 50 L27.4 56.4Z" fill="#000"/>
<path d="M50.8 236.8 L55.4 231 L55.6 236.8Z" fill="#000"/><path d="M75.4 231.8 L70.6 226.6 L70.6 231.8Z" fill="#000"/>
<rect x="75.6" y="41" width="1.1" height="332" fill="#5a5a5a"/>
<path d="M76.6 44.8 L80.2 42 L80.2 47.6Z" fill="#e01818"/>
<rect x="76.6" y="59.9" width="1.6" height="0.6" fill="#5a5a5a"/>
<text x="78.6" y="61.9" font-size="4.6" fill="#5e5e4e">500</text>
<rect x="76.6" y="78.5" width="1.6" height="0.6" fill="#5a5a5a"/>
<text x="78.6" y="80.5" font-size="4.6" fill="#5e5e4e">1000</text>
<rect x="76.6" y="97.2" width="1.6" height="0.6" fill="#5a5a5a"/>
<text x="78.6" y="99.2" font-size="4.6" fill="#5e5e4e">1500</text>
<rect x="76.6" y="115.8" width="1.6" height="0.6" fill="#5a5a5a"/>
<text x="78.6" y="117.8" font-size="4.6" fill="#5e5e4e">2000</text>
<rect x="76.6" y="134.4" width="1.6" height="0.6" fill="#5a5a5a"/>
<text x="78.6" y="136.4" font-size="4.6" fill="#5e5e4e">2500</text>
<rect x="76.6" y="153.0" width="1.6" height="0.6" fill="#5a5a5a"/>
<text x="78.6" y="155.0" font-size="4.6" fill="#5e5e4e">3000</text>
<rect x="76.6" y="171.6" width="1.6" height="0.6" fill="#5a5a5a"/>
<text x="78.6" y="173.6" font-size="4.6" fill="#5e5e4e">3500</text>
<rect x="76.6" y="190.3" width="1.6" height="0.6" fill="#5a5a5a"/>
<text x="78.6" y="192.3" font-size="4.6" fill="#5e5e4e">4000</text>
<rect x="76.6" y="208.9" width="1.6" height="0.6" fill="#5a5a5a"/>
<text x="78.6" y="210.9" font-size="4.6" fill="#5e5e4e">4500</text>
<rect x="76.6" y="227.5" width="1.6" height="0.6" fill="#5a5a5a"/>
<text x="78.6" y="229.5" font-size="4.6" fill="#5e5e4e">5000</text>
<rect x="76.6" y="246.1" width="1.6" height="0.6" fill="#5a5a5a"/>
<text x="78.6" y="248.1" font-size="4.6" fill="#5e5e4e">5500</text>
<rect x="76.6" y="264.7" width="1.6" height="0.6" fill="#5a5a5a"/>
<text x="78.6" y="266.7" font-size="4.6" fill="#5e5e4e">6000</text>
<rect x="76.6" y="283.4" width="1.6" height="0.6" fill="#5a5a5a"/>
<text x="78.6" y="285.4" font-size="4.6" fill="#5e5e4e">6500</text>
<rect x="76.6" y="302.0" width="1.6" height="0.6" fill="#5a5a5a"/>
<text x="78.6" y="304.0" font-size="4.6" fill="#5e5e4e">7000</text>
<rect x="76.6" y="320.6" width="1.6" height="0.6" fill="#5a5a5a"/>
<text x="78.6" y="322.6" font-size="4.6" fill="#5e5e4e">7500</text>
<rect x="76.6" y="339.2" width="1.6" height="0.6" fill="#5a5a5a"/>
<text x="78.6" y="341.2" font-size="4.6" fill="#5e5e4e">8000</text>
<rect x="76.6" y="357.8" width="1.6" height="0.6" fill="#5a5a5a"/>
<text x="78.6" y="359.8" font-size="4.6" fill="#5e5e4e">8500</text>
<text x="78.6" y="374.8" font-size="4.6" fill="#4a4a3a">8900</text>
<text x="80" y="34.3" font-size="4.8" fill="#222" textLength="8.6" lengthAdjust="spacingAndGlyphs">TVD</text>
<text x="82.4" y="40" font-size="4.8" fill="#e02020">ft</text>
<text x="40" y="35.3" font-size="5" fill="#f59a3a" textLength="15.4" lengthAdjust="spacingAndGlyphs">P:3531</text>
<g><path d="M9.6 31.8 L13.8 29.4 L13.8 34.4 L10.6 34.4Z" fill="#1428d8"/><path d="M3 41 L4.6 38 h4.8 L11 41Z" fill="#1428d8"/><circle cx="6.9" cy="34.7" r="4.3" fill="#1a1a6a"/><circle cx="6.9" cy="34.7" r="3.5" fill="#d8ecd8"/><circle cx="6.9" cy="34.7" r="2.7" fill="none" stroke="#1a8a2a" stroke-width="1.3" stroke-dasharray="0.9 0.7"/><circle cx="6.9" cy="34.7" r="1.5" fill="#22c032"/></g>
<path d="M14.8 32 H18.9 V41" stroke="#2a3a18" stroke-width="3" fill="none"/><path d="M15.2 32 H18.9 V41" stroke="#5a9e30" stroke-width="1.9" fill="none"/>
<rect x="14.4" y="38.4" width="2.6" height="3.2" fill="#2a4a2a"/><rect x="14.9" y="39" width="2" height="2.1" fill="#90e890"/>
<rect x="20.4" y="38.4" width="11.8" height="3.2" fill="#2a4a2a"/><rect x="20.6" y="39" width="11" height="2.1" fill="#90e890"/>
<text x="6" y="372.2" font-size="4.6" fill="#2222bb" textLength="21.5" lengthAdjust="spacingAndGlyphs">BHP 7757</text>
<text x="6" y="377.2" font-size="4.6" fill="#2222bb" textLength="23" lengthAdjust="spacingAndGlyphs">ECD 16.75</text>
<rect x="1.6" y="379.8" width="3.4" height="3.4" fill="#fbb40a" stroke="#6a5a20" stroke-width="0.5"/>
<text x="5.6" y="383.8" font-size="4.8" fill="#333" textLength="11.4" lengthAdjust="spacingAndGlyphs">16.8#</text>
<rect x="32.4" y="379.8" width="3.4" height="3.4" fill="#5cb531" stroke="#2a5a20" stroke-width="0.5"/>
<text x="36.4" y="383.8" font-size="4.8" fill="#333" textLength="12.4" lengthAdjust="spacingAndGlyphs">12.3#</text>
<rect x="93.4" y="28.4" width="1.6" height="367" fill="#f4f4f4"/>
<rect x="95.2" y="82.6" width="0.9" height="312.6" fill="#707070"/>
<rect x="95" y="31" width="36" height="7" fill="#c0c0c0"/>
<text x="112.3" y="36.5" font-size="5.6" fill="#000" text-anchor="middle" textLength="10.6" lengthAdjust="spacingAndGlyphs">Input</text>
<rect x="133" y="31" width="36.7" height="7" fill="#00c2c2"/>
<text x="150.5" y="36.5" font-size="5.6" fill="#000" text-anchor="middle" textLength="21.4" lengthAdjust="spacingAndGlyphs">Controlled</text>
<rect x="171" y="31" width="36.3" height="7" fill="#c6c600"/>
<text x="188" y="36.5" font-size="5.6" fill="#000" text-anchor="middle" textLength="22" lengthAdjust="spacingAndGlyphs">Calculated</text>
<rect x="211.4" y="29.2" width="9.6" height="9.2" fill="#d6e8fa" stroke="#2a78d0" stroke-width="0.7"/><path d="M214.2 30.2 L218.9 33.8 L214.2 37.4Z" fill="#1f78d8"/>
<rect x="222.4" y="29.1" width="9.8" height="9.4" fill="#e3e3e3" stroke="#bdbdbd" stroke-width="0.5"/>
<rect x="233.2" y="29.1" width="9.8" height="9.4" fill="#e3e3e3" stroke="#bdbdbd" stroke-width="0.5"/>
<rect x="244" y="29.1" width="9.8" height="9.4" fill="#e3e3e3" stroke="#bdbdbd" stroke-width="0.5"/>
<path d="M225.2 30.8 v6 M228.2 30.8 v6" stroke="#c2c2c2" stroke-width="1.2"/>
<path d="M236.6 30.8 L240.8 33.8 L236.6 36.8Z" fill="#555"/><path d="M235.6 30.8 v6" stroke="#666" stroke-width="0.9"/>
<rect x="246.2" y="33.6" width="5.4" height="2.8" fill="#6e6e6e"/><rect x="246.8" y="31.8" width="4.2" height="1.8" fill="#c0c0c0"/>
<rect x="259" y="33.2" width="302" height="0.7" fill="#d6d6d6"/>
<path d="M560.2 37.4 V31 L562.6 28.8 L565 31 V37.4Z" fill="#bdbdbd" stroke="#a8a8a8" stroke-width="0.4"/>
<path d="M567 31.2 L570 33.4 L567 35.6Z" fill="#1a6ad0"/>
<text x="572.6" y="34.6" font-size="5" fill="#2222cc" textLength="20.4" lengthAdjust="spacingAndGlyphs">00:21:25</text>
<rect x="571" y="37.9" width="25" height="0.6" fill="#c8c8c8"/><rect x="577.7" y="36.5" width="2.6" height="3.3" rx="0.8" fill="#1a6ad0"/>
<rect x="95" y="40.4" width="36.0" height="30" fill="#c0c0c0"/>
<text x="113.0" y="46.4" font-size="6.1" fill="#8b0a0a" text-anchor="middle" font-weight="bold" textLength="22.5" lengthAdjust="spacingAndGlyphs">Flow In</text>
<text x="123.2" y="59.8" font-size="10.4" fill="#111" text-anchor="end" textLength="17.4" lengthAdjust="spacingAndGlyphs">500</text>
<text x="113.0" y="67.9" font-size="5.3" fill="#138a13" text-anchor="middle">gpm</text>
<rect x="124.7" y="52" width="5" height="7.8" fill="#e6e6e6" stroke="#bcbcbc" stroke-width="0.3"/>
<path d="M126.3 55.2 l0.9 -1.4 l0.9 1.4z M126.3 56.8 l0.9 1.4 l0.9 -1.4z" fill="#222"/>
<rect x="133" y="40.4" width="36.7" height="30" fill="#c0c0c0"/>
<text x="151.3" y="46.4" font-size="6.1" fill="#8b0a0a" text-anchor="middle" font-weight="bold" textLength="27.2" lengthAdjust="spacingAndGlyphs">Flow Out</text>
<text x="161.4" y="59.8" font-size="10.4" fill="#111" text-anchor="end" textLength="17.4" lengthAdjust="spacingAndGlyphs">500</text>
<text x="151.3" y="67.9" font-size="5.3" fill="#138a13" text-anchor="middle">gpm</text>
<rect x="171" y="40.4" width="42.0" height="30" fill="#c0c0c0"/>
<text x="192.0" y="46.4" font-size="6.1" fill="#8b0a0a" text-anchor="middle" font-weight="bold" textLength="29" lengthAdjust="spacingAndGlyphs">Bit Depth</text>
<text x="192.4" y="67.9" font-size="5.3" fill="#138a13" text-anchor="middle">ft</text>
<rect x="207.5" y="52" width="5" height="7.8" fill="#e6e6e6" stroke="#bcbcbc" stroke-width="0.3"/>
<path d="M209.1 55.2 l0.9 -1.4 l0.9 1.4z M209.1 56.8 l0.9 1.4 l0.9 -1.4z" fill="#222"/>
<clipPath id="bdc"><rect x="171" y="48" width="36.3" height="14"/></clipPath>
<text x="171.6" y="59.8" font-size="10.4" fill="#6e6e6e" textLength="37.6" lengthAdjust="spacingAndGlyphs" clip-path="url(#bdc)">10131.3</text>
<rect x="215" y="40.4" width="36.3" height="30" fill="#c0c0c0"/>
<text x="233.2" y="46.4" font-size="6.1" fill="#8b0a0a" text-anchor="middle" font-weight="bold">ROP</text>
<text x="243.6" y="59.8" font-size="10.4" fill="#111" text-anchor="end" textLength="17.6" lengthAdjust="spacingAndGlyphs">120</text>
<text x="232.4" y="67.9" font-size="5.3" fill="#138a13" text-anchor="middle">ft/hr</text>
<rect x="245.1" y="52" width="5" height="7.8" fill="#e6e6e6" stroke="#bcbcbc" stroke-width="0.3"/>
<path d="M246.7 55.2 l0.9 -1.4 l0.9 1.4z M246.7 56.8 l0.9 1.4 l0.9 -1.4z" fill="#222"/>
<rect x="253" y="40.4" width="35.8" height="30" fill="#c0c0c0"/>
<text x="270.9" y="46" font-size="6.1" fill="#8b0a0a" text-anchor="middle" font-weight="bold">RPM</text>
<text x="281.4" y="59.8" font-size="10.4" fill="#111" text-anchor="end" textLength="11.6" lengthAdjust="spacingAndGlyphs">80</text>
<text x="271" y="67.9" font-size="5.3" fill="#138a13" text-anchor="middle">rpm</text>
<rect x="282.9" y="52" width="5" height="7.8" fill="#e6e6e6" stroke="#bcbcbc" stroke-width="0.3"/>
<path d="M284.5 55.2 l0.9 -1.4 l0.9 1.4z M284.5 56.8 l0.9 1.4 l0.9 -1.4z" fill="#222"/>
<rect x="290.8" y="40.4" width="37.5" height="30" fill="#c0c0c0"/>
<text x="309.6" y="46.4" font-size="6.1" fill="#8b0a0a" text-anchor="middle" font-weight="bold" textLength="19" lengthAdjust="spacingAndGlyphs">Fluids</text>
<rect x="294.4" y="51.6" width="30" height="8.6" fill="#ffffff" stroke="#8a8a8a" stroke-width="0.5"/>
<text x="295.6" y="57.6" font-size="4.6" fill="#223" textLength="9" lengthAdjust="spacingAndGlyphs">New</text>
<path d="M318.6 54.8 l1.7 1.7 l1.7 -1.7" stroke="#444" stroke-width="0.5" fill="none"/>
<rect x="329.7" y="40.4" width="45.1" height="30" fill="#00c2c2"/>
<text x="352.2" y="46.4" font-size="6.1" fill="#8b0a0a" text-anchor="middle" font-weight="bold" textLength="34" lengthAdjust="spacingAndGlyphs">Well Head</text>
<text x="367" y="59.8" font-size="10.4" fill="#061a1a" text-anchor="end" textLength="11.8" lengthAdjust="spacingAndGlyphs">40</text>
<text x="351.6" y="67.9" font-size="5.3" fill="#138a13" text-anchor="middle">psi</text>
<rect x="368.5" y="52" width="5" height="7.8" fill="#e6e6e6" stroke="#bcbcbc" stroke-width="0.3"/>
<path d="M370.1 55.2 l0.9 -1.4 l0.9 1.4z M370.1 56.8 l0.9 1.4 l0.9 -1.4z" fill="#222"/>
<rect x="330.8" y="64" width="5.6" height="5.6" fill="#ffffff" stroke="#3a3a3a" stroke-width="0.6"/>
<path d="M331.9 66.8 l1.3 1.6 l2.4 -3.6" stroke="#222" stroke-width="0.7" fill="none"/>
<rect x="376.7" y="40.4" width="45.3" height="30" fill="#c4c400"/>
<text x="399.4" y="47.6" font-size="6.1" fill="#8b0a0a" text-anchor="middle" font-weight="bold" textLength="32" lengthAdjust="spacingAndGlyphs">StandPipe</text>
<text x="413.4" y="59.8" font-size="10.4" fill="#6e6e6e" text-anchor="end" textLength="23" lengthAdjust="spacingAndGlyphs">3531</text>
<text x="398.8" y="67.9" font-size="5.3" fill="#138a13" text-anchor="middle">psi</text>
<rect x="377.8" y="64" width="5.6" height="5.6" fill="#ffffff" stroke="#3a3a3a" stroke-width="0.6"/>
<rect x="423.3" y="40.4" width="45.0" height="30" fill="#c4c400"/>
<text x="445.8" y="47.6" font-size="6.1" fill="#8b0a0a" text-anchor="middle" font-weight="bold" textLength="39.6" lengthAdjust="spacingAndGlyphs">Bottom Hole</text>
<text x="460.4" y="59.8" font-size="10.4" fill="#6e6e6e" text-anchor="end" textLength="23" lengthAdjust="spacingAndGlyphs">7757</text>
<text x="445.2" y="67.9" font-size="5.3" fill="#138a13" text-anchor="middle">psi</text>
<rect x="424.40000000000003" y="64" width="5.6" height="5.6" fill="#ffffff" stroke="#3a3a3a" stroke-width="0.6"/>
<rect x="469.8" y="40.4" width="45.1" height="30" fill="#c4c400"/>
<text x="492.4" y="47.6" font-size="6.1" fill="#8b0a0a" text-anchor="middle" font-weight="bold">ECD</text>
<text x="506.4" y="59.8" font-size="10.4" fill="#6e6e6e" text-anchor="end" textLength="25.4" lengthAdjust="spacingAndGlyphs">16.75</text>
<text x="492.6" y="67.9" font-size="5.3" fill="#138a13" text-anchor="middle">ppg</text>
<rect x="470.90000000000003" y="64" width="5.6" height="5.6" fill="#ffffff" stroke="#3a3a3a" stroke-width="0.6"/>
<rect x="514.9" y="40.4" width="34.1" height="30" fill="#98f898"/>
<text x="532.0" y="47.6" font-size="6.1" fill="#8b0a0a" text-anchor="middle" font-weight="bold">EMW</text>
<text x="549" y="59.8" font-size="10.4" fill="#6e6e6e" text-anchor="end" textLength="25.4" lengthAdjust="spacingAndGlyphs">15.89</text>
<text x="533" y="67.9" font-size="5.3" fill="#138a13" text-anchor="middle">ppg</text>
<rect x="550.4" y="40.6" width="41" height="29.8" fill="#98f898"/>
<text x="570.6" y="47.9" font-size="6.2" fill="#8b0a0a" text-anchor="middle" font-weight="bold" textLength="35" lengthAdjust="spacingAndGlyphs">Well Depth</text>
<text x="552.5" y="57.7" font-size="5.4" fill="#7a4420" textLength="8.4" lengthAdjust="spacingAndGlyphs">MD</text>
<text x="552.5" y="68.1" font-size="5.4" fill="#7a4420" textLength="9.6" lengthAdjust="spacingAndGlyphs">TVD</text>
<text x="588.9" y="57.1" font-size="6.8" fill="#0c2a2a" text-anchor="end" textLength="20.9" lengthAdjust="spacingAndGlyphs">10,131.</text>
<text x="589.1" y="67.8" font-size="6.8" fill="#0c2a2a" text-anchor="end" textLength="22" lengthAdjust="spacingAndGlyphs">8,904.6</text>
<rect x="96" y="82.4" width="501" height="312.8" fill="#ffffff"/>
<rect x="96" y="82.2" width="501" height="0.5" fill="#d0d0d0"/>
<rect x="597" y="82.2" width="13" height="312.6" fill="#c6c6c6"/>
<path d="M600 234.6 L597.4 238 L600 241.4Z" fill="#8a8a8a"/>
<rect x="96.4" y="75.2" width="33.8" height="7.2" fill="#f1f1f1" stroke="#d4d4d4" stroke-width="0.4"/>
<rect x="156.6" y="75.2" width="41.8" height="7.2" fill="#f1f1f1" stroke="#d4d4d4" stroke-width="0.4"/>
<rect x="198.4" y="75.2" width="44.8" height="7.2" fill="#f1f1f1" stroke="#d4d4d4" stroke-width="0.4"/>
<rect x="243.2" y="75.2" width="31.2" height="7.2" fill="#f1f1f1" stroke="#d4d4d4" stroke-width="0.4"/>
<rect x="130.2" y="73.6" width="26.2" height="9.4" fill="#ffffff" stroke="#d4d4d4" stroke-width="0.4"/>
<rect x="130.39999999999998" y="82" width="25.8" height="1.2" fill="#ffffff"/>
<circle cx="102.5" cy="78.9" r="3" fill="#fff" stroke="#1a1a1a" stroke-width="1"/><path d="M102.5 78.9 L104 77.2" stroke="#1a1a1a" stroke-width="0.6"/>
<text x="109" y="81.4" font-size="6" fill="#000" textLength="18" lengthAdjust="spacingAndGlyphs">Pressure</text>
<g><rect x="133.4" y="74.8" width="6.4" height="6" fill="#f2f2f2" stroke="#9a9a9a" stroke-width="0.4"/><path d="M134.2 79.8 L135.6 76.4 L137 79.4 L139 75.6" stroke="#3a7ad0" stroke-width="0.6" fill="none"/><path d="M134.2 76 L136.4 78.8 L139 79.8" stroke="#e04040" stroke-width="0.5" fill="none"/><path d="M135 75.4 L138.6 80.2" stroke="#30a040" stroke-width="0.4" fill="none"/></g>
<text x="143.4" y="80.2" font-size="6" fill="#000" textLength="9.4" lengthAdjust="spacingAndGlyphs">ECD</text>
<g><rect x="161.5" y="75.4" width="1.2" height="4.2" fill="#e03030"/><circle cx="162.1" cy="80" r="1.3" fill="#e03030"/></g>
<text x="168.6" y="81.4" font-size="6" fill="#000" textLength="27.6" lengthAdjust="spacingAndGlyphs">Temperature</text>
<g><rect x="201.4" y="74.6" width="7.8" height="7.6" fill="#f6e070" stroke="#e08030" stroke-width="0.6"/><rect x="203.4" y="75.8" width="2.8" height="3.6" fill="#2a4ad0"/><rect x="202.4" y="79.2" width="5" height="1.6" fill="#6a9ae0"/></g>
<text x="211.8" y="81.4" font-size="6" fill="#000" textLength="29.6" lengthAdjust="spacingAndGlyphs">Hole Cleaning</text>
<g><rect x="247.2" y="75.6" width="7" height="6.2" fill="#f4f4f4" stroke="#6a6a6a" stroke-width="0.5"/><path d="M248 79.6 l1.4 -2 l1.4 1.4 l2.4 -2.4" stroke="#d03030" stroke-width="0.6" fill="none"/><path d="M248 80.8 h5.6" stroke="#444" stroke-width="0.5"/></g>
<text x="257.6" y="81.4" font-size="6" fill="#000" textLength="14.4" lengthAdjust="spacingAndGlyphs">Trends</text>
<text x="112.6" y="89" font-size="5.3" fill="#f02020" textLength="7.6" lengthAdjust="spacingAndGlyphs">MD</text>
<text x="114.8" y="96.2" font-size="4.6" fill="#223">ft</text>
<text x="125" y="93.8" font-size="5.3" fill="#2a2ab0" textLength="9.2" lengthAdjust="spacingAndGlyphs">14.8</text>
<text x="585.4" y="88.4" font-size="5.3" fill="#f02020" textLength="9.6" lengthAdjust="spacingAndGlyphs">TVD</text>
<text x="576" y="93.6" font-size="5.3" fill="#2a2ab0" textLength="9.6" lengthAdjust="spacingAndGlyphs">18.0</text>
<text x="587.4" y="96" font-size="4.6" fill="#223">ft</text>
<text x="351.5" y="89.4" font-size="5.2" fill="#111" text-anchor="middle" font-weight="bold" textLength="52" lengthAdjust="spacingAndGlyphs">Density/ECD [ppg]</text>
<rect x="99.4" y="92.8" width="1.5" height="1.3" fill="#222"/>
<rect x="101.7" y="92.8" width="1.5" height="1.3" fill="#222"/>
<rect x="104.0" y="92.8" width="1.5" height="1.3" fill="#222"/>
<rect x="97.6" y="97.0" width="10" height="9.2" fill="#d0d0d0" stroke="#8a8a8a" stroke-width="0.5"/>
<rect x="98.8" y="98.1" width="7.6" height="7" fill="#dfe8f6"/>
<rect x="97.6" y="107.4" width="10" height="9.2" fill="#d0d0d0" stroke="#8a8a8a" stroke-width="0.5"/>
<rect x="98.8" y="108.5" width="7.6" height="7" fill="#e0ecf8"/>
<rect x="97.6" y="117.8" width="10" height="9.2" fill="#d0d0d0" stroke="#8a8a8a" stroke-width="0.5"/>
<rect x="98.8" y="118.9" width="7.6" height="7" fill="#f6f2f2"/>
<rect x="97.6" y="128.2" width="10" height="9.2" fill="#d0d0d0" stroke="#8a8a8a" stroke-width="0.5"/>
<rect x="98.8" y="129.3" width="7.6" height="7" fill="#dcecfa"/>
<rect x="97.6" y="138.6" width="10" height="9.2" fill="#d0d0d0" stroke="#8a8a8a" stroke-width="0.5"/>
<rect x="98.8" y="139.7" width="7.6" height="7" fill="#c4c4b4"/>
<rect x="97.6" y="149.0" width="10" height="9.2" fill="#d0d0d0" stroke="#8a8a8a" stroke-width="0.5"/>
<rect x="98.8" y="150.1" width="7.6" height="7" fill="#dcd4a4"/>
<rect x="97.6" y="159.4" width="10" height="9.2" fill="#d0d0d0" stroke="#8a8a8a" stroke-width="0.5"/>
<rect x="98.8" y="160.5" width="7.6" height="7" fill="#bcbcb4"/>
<rect x="97.6" y="169.8" width="10" height="9.2" fill="#d0d0d0" stroke="#8a8a8a" stroke-width="0.5"/>
<rect x="98.8" y="170.9" width="7.6" height="7" fill="#aaaacc"/>
<rect x="97.6" y="180.2" width="10" height="9.2" fill="#d0d0d0" stroke="#8a8a8a" stroke-width="0.5"/>
<rect x="98.8" y="181.3" width="7.6" height="7" fill="#f6f6fa"/>
<rect x="97.6" y="190.6" width="10" height="9.2" fill="#d0d0d0" stroke="#8a8a8a" stroke-width="0.5"/>
<rect x="98.8" y="191.7" width="7.6" height="7" fill="#d4d8e0"/>
<rect x="97.6" y="201.0" width="10" height="9.2" fill="#d0d0d0" stroke="#8a8a8a" stroke-width="0.5"/>
<rect x="98.8" y="202.1" width="7.6" height="7" fill="#e4e8ec"/>
<rect x="97.6" y="211.4" width="10" height="9.2" fill="#d0d0d0" stroke="#8a8a8a" stroke-width="0.5"/>
<rect x="98.8" y="212.5" width="7.6" height="7" fill="#d0d6d6"/>
<g stroke="#5a7ab0" stroke-width="0.5" fill="none"><rect x="99.2" y="98.4" width="6.8" height="6.4" fill="#cfe0f6"/><path d="M101.4 98.4 v6.4 M103.7 98.4 v6.4 M99.2 100.4 h6.8"/></g>
<circle cx="102" cy="111.4" r="2.3" fill="#9ac4f0" stroke="#4a7ab8" stroke-width="0.6"/><path d="M103.8 113.2 l1.8 1.8" stroke="#c09030" stroke-width="0.9"/>
<path d="M102.6 119.39999999999999 v6.2 M100 122.2 h5.4" stroke="#c02060" stroke-width="0.6"/><path d="M103.4 122.8 l2 2.6 l-2.2 -0.4z" fill="#2a3ac0"/>
<path d="M99.6 130.0 l6 5.8 M105.6 130.0 l-6 5.8" stroke="#2a8ae8" stroke-width="1.5"/>
<path d="M102.8 140.0 l1.6 6.4 h-3z" fill="#1a1a1a"/><rect x="101.6" y="143.2" width="1.6" height="2" fill="#e0c020"/>
<rect x="99.6" y="151.0" width="6" height="5.4" fill="#f4e8b0" stroke="#6a5a2a" stroke-width="0.6"/><rect x="100.4" y="153.4" width="4.4" height="1.2" fill="#e07070"/>
<path d="M99.6 161.4 l6 5.4" stroke="#40a040" stroke-width="0.8"/><path d="M100 166.20000000000002 l2 -2 l3.6 1.2" stroke="#c04080" stroke-width="0.6" fill="none"/>
<path d="M99.6 172.20000000000002 l3 2.4 l3 -2.6" stroke="#d02020" stroke-width="0.8" fill="none"/><path d="M99.8 177.20000000000002 l5.8 -3.6" stroke="#4040c0" stroke-width="0.7"/>
<path d="M102.6 182.0 v5.8 M99.8 184.79999999999998 h5.8" stroke="#c04060" stroke-width="0.7" stroke-dasharray="1.2 0.6"/><circle cx="102.6" cy="184.79999999999998" r="1" fill="#4060c0"/>
<rect x="99.8" y="193.60000000000002" width="5.8" height="4.4" fill="#9ab0d0" stroke="#5a6a8a" stroke-width="0.5"/><rect x="101" y="192.40000000000003" width="2.4" height="1.6" fill="#7a8aa8"/>
<path d="M99.8 203.0 l5.8 5.4" stroke="#d04040" stroke-width="0.7"/><path d="M99.8 208.2 l5.8 -4.4" stroke="#30a0c0" stroke-width="0.7"/><circle cx="102.6" cy="205.8" r="1" fill="#40a060"/>
<path d="M99.6 218.20000000000002 l1.8 -4.6 h4.4 l-1.8 4.6z" fill="#3ab0b0" stroke="#2a7a7a" stroke-width="0.4"/>
<path d="M168.9 97.0 V382.3 M214.8 97.0 V382.3 M260.7 97.0 V382.3 M306.6 97.0 V382.3 M352.5 97.0 V382.3 M398.4 97.0 V382.3 M444.3 97.0 V382.3 M490.2 97.0 V382.3 M536.1 97.0 V382.3 M123.0 113.9 H582.0 M123.0 130.8 H582.0 M123.0 147.7 H582.0 M123.0 164.6 H582.0 M123.0 181.4 H582.0 M123.0 198.3 H582.0 M123.0 215.2 H582.0 M123.0 232.1 H582.0 M123.0 249.0 H582.0 M123.0 265.9 H582.0 M123.0 282.8 H582.0 M123.0 299.7 H582.0 M123.0 316.6 H582.0 M123.0 333.5 H582.0 M123.0 350.4 H582.0 M123.0 367.2 H582.0" stroke="#12eefb" stroke-width="0.85" fill="none"/>
<rect x="122.7" y="95.2" width="0.6" height="1.6" fill="#19c6d2"/>
<rect x="122.7" y="382.6" width="0.6" height="1.4" fill="#19c6d2"/>
<text x="170.1" y="96" font-size="4.7" fill="#333" text-anchor="middle" textLength="10.0" lengthAdjust="spacingAndGlyphs">15.12</text>
<text x="170.1" y="388.4" font-size="4.7" fill="#333" text-anchor="middle" textLength="10.0" lengthAdjust="spacingAndGlyphs">15.12</text>
<rect x="168.6" y="95.2" width="0.6" height="1.6" fill="#19c6d2"/>
<rect x="168.6" y="382.6" width="0.6" height="1.4" fill="#19c6d2"/>
<text x="216.0" y="96" font-size="4.7" fill="#333" text-anchor="middle" textLength="10.0" lengthAdjust="spacingAndGlyphs">15.44</text>
<text x="216.0" y="388.4" font-size="4.7" fill="#333" text-anchor="middle" textLength="10.0" lengthAdjust="spacingAndGlyphs">15.44</text>
<rect x="214.5" y="95.2" width="0.6" height="1.6" fill="#19c6d2"/>
<rect x="214.5" y="382.6" width="0.6" height="1.4" fill="#19c6d2"/>
<text x="261.9" y="96" font-size="4.7" fill="#333" text-anchor="middle" textLength="10.0" lengthAdjust="spacingAndGlyphs">15.76</text>
<text x="261.9" y="388.4" font-size="4.7" fill="#333" text-anchor="middle" textLength="10.0" lengthAdjust="spacingAndGlyphs">15.76</text>
<rect x="260.4" y="95.2" width="0.6" height="1.6" fill="#19c6d2"/>
<rect x="260.4" y="382.6" width="0.6" height="1.4" fill="#19c6d2"/>
<text x="307.8" y="96" font-size="4.7" fill="#333" text-anchor="middle" textLength="10.0" lengthAdjust="spacingAndGlyphs">16.08</text>
<text x="307.8" y="388.4" font-size="4.7" fill="#333" text-anchor="middle" textLength="10.0" lengthAdjust="spacingAndGlyphs">16.08</text>
<rect x="306.3" y="95.2" width="0.6" height="1.6" fill="#19c6d2"/>
<rect x="306.3" y="382.6" width="0.6" height="1.4" fill="#19c6d2"/>
<text x="353.7" y="96" font-size="4.7" fill="#333" text-anchor="middle" textLength="7.800000000000001" lengthAdjust="spacingAndGlyphs">16.4</text>
<text x="353.7" y="388.4" font-size="4.7" fill="#333" text-anchor="middle" textLength="7.800000000000001" lengthAdjust="spacingAndGlyphs">16.4</text>
<rect x="352.2" y="95.2" width="0.6" height="1.6" fill="#19c6d2"/>
<rect x="352.2" y="382.6" width="0.6" height="1.4" fill="#19c6d2"/>
<text x="399.6" y="96" font-size="4.7" fill="#333" text-anchor="middle" textLength="10.0" lengthAdjust="spacingAndGlyphs">16.72</text>
<text x="399.6" y="388.4" font-size="4.7" fill="#333" text-anchor="middle" textLength="10.0" lengthAdjust="spacingAndGlyphs">16.72</text>
<rect x="398.1" y="95.2" width="0.6" height="1.6" fill="#19c6d2"/>
<rect x="398.1" y="382.6" width="0.6" height="1.4" fill="#19c6d2"/>
<text x="445.5" y="96" font-size="4.7" fill="#333" text-anchor="middle" textLength="10.0" lengthAdjust="spacingAndGlyphs">17.04</text>
<text x="445.5" y="388.4" font-size="4.7" fill="#333" text-anchor="middle" textLength="10.0" lengthAdjust="spacingAndGlyphs">17.04</text>
<rect x="444.0" y="95.2" width="0.6" height="1.6" fill="#19c6d2"/>
<rect x="444.0" y="382.6" width="0.6" height="1.4" fill="#19c6d2"/>
<text x="491.4" y="96" font-size="4.7" fill="#333" text-anchor="middle" textLength="10.0" lengthAdjust="spacingAndGlyphs">17.36</text>
<text x="491.4" y="388.4" font-size="4.7" fill="#333" text-anchor="middle" textLength="10.0" lengthAdjust="spacingAndGlyphs">17.36</text>
<rect x="489.9" y="95.2" width="0.6" height="1.6" fill="#19c6d2"/>
<rect x="489.9" y="382.6" width="0.6" height="1.4" fill="#19c6d2"/>
<text x="537.3" y="96" font-size="4.7" fill="#333" text-anchor="middle" textLength="10.0" lengthAdjust="spacingAndGlyphs">17.68</text>
<text x="537.3" y="388.4" font-size="4.7" fill="#333" text-anchor="middle" textLength="10.0" lengthAdjust="spacingAndGlyphs">17.68</text>
<rect x="535.8" y="95.2" width="0.6" height="1.6" fill="#19c6d2"/>
<rect x="535.8" y="382.6" width="0.6" height="1.4" fill="#19c6d2"/>
<rect x="581.7" y="95.2" width="0.6" height="1.6" fill="#19c6d2"/>
<rect x="581.7" y="382.6" width="0.6" height="1.4" fill="#19c6d2"/>
<text x="122.6" y="388.4" font-size="4.7" fill="#333" text-anchor="middle" textLength="7.8" lengthAdjust="spacingAndGlyphs">14.8</text>
<text x="582" y="388.4" font-size="4.7" fill="#333" text-anchor="middle" textLength="7.8" lengthAdjust="spacingAndGlyphs">18.0</text>
<text x="110.4" y="99.3" font-size="4.7" fill="#333" textLength="2.25" lengthAdjust="spacingAndGlyphs">0</text>
<text x="583.8" y="99.3" font-size="4.7" fill="#333" textLength="2.25" lengthAdjust="spacingAndGlyphs">0</text>
<text x="110.4" y="116.2" font-size="4.7" fill="#333" textLength="6.75" lengthAdjust="spacingAndGlyphs">600</text>
<text x="583.8" y="116.2" font-size="4.7" fill="#333" textLength="6.75" lengthAdjust="spacingAndGlyphs">600</text>
<text x="110.4" y="133.1" font-size="4.7" fill="#333" textLength="9.0" lengthAdjust="spacingAndGlyphs">1200</text>
<text x="583.8" y="133.1" font-size="4.7" fill="#333" textLength="9.0" lengthAdjust="spacingAndGlyphs">1180</text>
<text x="110.4" y="150.0" font-size="4.7" fill="#333" textLength="9.0" lengthAdjust="spacingAndGlyphs">1800</text>
<text x="583.8" y="150.0" font-size="4.7" fill="#333" textLength="9.0" lengthAdjust="spacingAndGlyphs">1705</text>
<text x="110.4" y="166.9" font-size="4.7" fill="#333" textLength="9.0" lengthAdjust="spacingAndGlyphs">2400</text>
<text x="583.8" y="166.9" font-size="4.7" fill="#333" textLength="9.0" lengthAdjust="spacingAndGlyphs">2151</text>
<text x="110.4" y="183.8" font-size="4.7" fill="#333" textLength="9.0" lengthAdjust="spacingAndGlyphs">3000</text>
<text x="583.8" y="183.8" font-size="4.7" fill="#333" textLength="9.0" lengthAdjust="spacingAndGlyphs">2603</text>
<text x="110.4" y="200.6" font-size="4.7" fill="#333" textLength="9.0" lengthAdjust="spacingAndGlyphs">3600</text>
<text x="583.8" y="200.6" font-size="4.7" fill="#333" textLength="9.0" lengthAdjust="spacingAndGlyphs">3063</text>
<text x="110.4" y="217.5" font-size="4.7" fill="#333" textLength="9.0" lengthAdjust="spacingAndGlyphs">4200</text>
<text x="583.8" y="217.5" font-size="4.7" fill="#333" textLength="9.0" lengthAdjust="spacingAndGlyphs">3532</text>
<text x="110.4" y="234.4" font-size="4.7" fill="#333" textLength="9.0" lengthAdjust="spacingAndGlyphs">4800</text>
<text x="583.8" y="234.4" font-size="4.7" fill="#333" textLength="9.0" lengthAdjust="spacingAndGlyphs">4002</text>
<text x="110.4" y="251.3" font-size="4.7" fill="#333" textLength="9.0" lengthAdjust="spacingAndGlyphs">5400</text>
<text x="583.8" y="251.3" font-size="4.7" fill="#333" textLength="9.0" lengthAdjust="spacingAndGlyphs">4468</text>
<text x="110.4" y="268.2" font-size="4.7" fill="#333" textLength="9.0" lengthAdjust="spacingAndGlyphs">6000</text>
<text x="583.8" y="268.2" font-size="4.7" fill="#333" textLength="9.0" lengthAdjust="spacingAndGlyphs">4939</text>
<text x="110.4" y="285.1" font-size="4.7" fill="#333" textLength="9.0" lengthAdjust="spacingAndGlyphs">6600</text>
<text x="583.8" y="285.1" font-size="4.7" fill="#333" textLength="9.0" lengthAdjust="spacingAndGlyphs">5425</text>
<text x="110.4" y="302.0" font-size="4.7" fill="#333" textLength="9.0" lengthAdjust="spacingAndGlyphs">7200</text>
<text x="583.8" y="302.0" font-size="4.7" fill="#333" textLength="9.0" lengthAdjust="spacingAndGlyphs">5983</text>
<text x="110.4" y="318.9" font-size="4.7" fill="#333" textLength="9.0" lengthAdjust="spacingAndGlyphs">7800</text>
<text x="583.8" y="318.9" font-size="4.7" fill="#333" textLength="9.0" lengthAdjust="spacingAndGlyphs">6574</text>
<text x="110.4" y="335.8" font-size="4.7" fill="#333" textLength="9.0" lengthAdjust="spacingAndGlyphs">8400</text>
<text x="583.8" y="335.8" font-size="4.7" fill="#333" textLength="9.0" lengthAdjust="spacingAndGlyphs">7174</text>
<text x="110.4" y="352.7" font-size="4.7" fill="#333" textLength="9.0" lengthAdjust="spacingAndGlyphs">9000</text>
<text x="583.8" y="352.7" font-size="4.7" fill="#333" textLength="9.0" lengthAdjust="spacingAndGlyphs">7774</text>
<text x="110.4" y="369.5" font-size="4.7" fill="#333" textLength="9.0" lengthAdjust="spacingAndGlyphs">9600</text>
<text x="583.8" y="369.5" font-size="4.7" fill="#333" textLength="9.0" lengthAdjust="spacingAndGlyphs">8374</text>
<defs><clipPath id="plotclip"><rect x="123.0" y="97.0" width="459.0" height="285.3"/></clipPath><pattern id="pph" width="2.66" height="2.66" patternUnits="userSpaceOnUse"><rect width="2.66" height="2.66" fill="#fff"/><path d="M-0.665 0.665 L0.665 -0.665 M0 2.66 L2.66 0 M1.995 3.325 L3.325 1.995" stroke="#3a9a44" stroke-width="0.78"/></pattern>
<pattern id="fph" width="2" height="2" patternUnits="userSpaceOnUse"><path d="M-0.5 0.5 L0.5 -0.5 M0 2 L2 0 M1.5 2.5 L2.5 1.5" stroke="#f418e0" stroke-width="0.55"/></pattern>
<pattern id="fpd" width="1.6" height="1.7" patternUnits="userSpaceOnUse"><rect x="0" y="0" width="1.1" height="1.1" fill="#f418e0"/></pattern>
<pattern id="fpl" width="2.4" height="3.4" patternUnits="userSpaceOnUse"><path d="M0 2 L2 0.6" stroke="#f418e0" stroke-width="0.7"/></pattern>
</defs>
<clipPath id="ppclip"><path d="M123 300.8 L135.7 301.2 L137.7 304.2 L150 304.6 L152.2 305.7 L159 307.7 L168 309.5 L177 311.7 L186 314 L188.4 317 L194.2 319.2 L194.8 323 L195.4 327 L198.6 329.6 L200.4 333.6 L204 337 L207.6 339.6 L211.6 341.6 L218 345 L225 347.5 L234 348.6 L243 349.3 L255 350 L266.4 350.6 L266.4 382.3 L123.0 382.3Z"/></clipPath>
<path d="M123 300.8 L135.7 301.2 L137.7 304.2 L150 304.6 L152.2 305.7 L159 307.7 L168 309.5 L177 311.7 L186 314 L188.4 317 L194.2 319.2 L194.8 323 L195.4 327 L198.6 329.6 L200.4 333.6 L204 337 L207.6 339.6 L211.6 341.6 L218 345 L225 347.5 L234 348.6 L243 349.3 L255 350 L266.4 350.6 L266.4 382.3 L123.0 382.3Z" fill="#ffffff"/>
<path d="M33.00 383.3 l90 -90 M35.66 383.3 l90 -90 M38.32 383.3 l90 -90 M40.98 383.3 l90 -90 M43.64 383.3 l90 -90 M46.30 383.3 l90 -90 M48.96 383.3 l90 -90 M51.62 383.3 l90 -90 M54.28 383.3 l90 -90 M56.94 383.3 l90 -90 M59.60 383.3 l90 -90 M62.26 383.3 l90 -90 M64.92 383.3 l90 -90 M67.58 383.3 l90 -90 M70.24 383.3 l90 -90 M72.90 383.3 l90 -90 M75.56 383.3 l90 -90 M78.22 383.3 l90 -90 M80.88 383.3 l90 -90 M83.54 383.3 l90 -90 M86.20 383.3 l90 -90 M88.86 383.3 l90 -90 M91.52 383.3 l90 -90 M94.18 383.3 l90 -90 M96.84 383.3 l90 -90 M99.50 383.3 l90 -90 M102.16 383.3 l90 -90 M104.82 383.3 l90 -90 M107.48 383.3 l90 -90 M110.14 383.3 l90 -90 M112.80 383.3 l90 -90 M115.46 383.3 l90 -90 M118.12 383.3 l90 -90 M120.78 383.3 l90 -90 M123.44 383.3 l90 -90 M126.10 383.3 l90 -90 M128.76 383.3 l90 -90 M131.42 383.3 l90 -90 M134.08 383.3 l90 -90 M136.74 383.3 l90 -90 M139.40 383.3 l90 -90 M142.06 383.3 l90 -90 M144.72 383.3 l90 -90 M147.38 383.3 l90 -90 M150.04 383.3 l90 -90 M152.70 383.3 l90 -90 M155.36 383.3 l90 -90 M158.02 383.3 l90 -90 M160.68 383.3 l90 -90 M163.34 383.3 l90 -90 M166.00 383.3 l90 -90 M168.66 383.3 l90 -90 M171.32 383.3 l90 -90 M173.98 383.3 l90 -90 M176.64 383.3 l90 -90 M179.30 383.3 l90 -90 M181.96 383.3 l90 -90 M184.62 383.3 l90 -90 M187.28 383.3 l90 -90 M189.94 383.3 l90 -90 M192.60 383.3 l90 -90 M195.26 383.3 l90 -90 M197.92 383.3 l90 -90 M200.58 383.3 l90 -90 M203.24 383.3 l90 -90 M205.90 383.3 l90 -90 M208.56 383.3 l90 -90 M211.22 383.3 l90 -90 M213.88 383.3 l90 -90 M216.54 383.3 l90 -90 M219.20 383.3 l90 -90 M221.86 383.3 l90 -90 M224.52 383.3 l90 -90 M227.18 383.3 l90 -90 M229.84 383.3 l90 -90 M232.50 383.3 l90 -90 M235.16 383.3 l90 -90 M237.82 383.3 l90 -90 M240.48 383.3 l90 -90 M243.14 383.3 l90 -90 M245.80 383.3 l90 -90 M248.46 383.3 l90 -90 M251.12 383.3 l90 -90 M253.78 383.3 l90 -90 M256.44 383.3 l90 -90 M259.10 383.3 l90 -90 M261.76 383.3 l90 -90 M264.42 383.3 l90 -90 M267.08 383.3 l90 -90 M269.74 383.3 l90 -90" stroke="#3a9a44" stroke-width="0.8" fill="none" clip-path="url(#ppclip)"/>
<path d="M123 300.8 L135.7 301.2 L137.7 304.2 L150 304.6 L152.2 305.7 L159 307.7 L168 309.5 L177 311.7 L186 314 L188.4 317 L194.2 319.2 L194.8 323 L195.4 327 L198.6 329.6 L200.4 333.6 L204 337 L207.6 339.6 L211.6 341.6 L218 345 L225 347.5 L234 348.6 L243 349.3 L255 350 L266.4 350.6" fill="none" stroke="#3a9a44" stroke-width="0.6" stroke-dasharray="1.6 0.8"/>
<clipPath id="hc1"><path d="M410.5 285.4 L456 276.7 L582.0 276.7 L582.0 285.4Z"/></clipPath>
<path d="M400.80 285.9 l9.7 -9.7 M404.50 285.9 l9.7 -9.7 M408.20 285.9 l9.7 -9.7 M411.90 285.9 l9.7 -9.7 M415.60 285.9 l9.7 -9.7 M419.30 285.9 l9.7 -9.7 M423.00 285.9 l9.7 -9.7 M426.70 285.9 l9.7 -9.7 M430.40 285.9 l9.7 -9.7 M434.10 285.9 l9.7 -9.7 M437.80 285.9 l9.7 -9.7 M441.50 285.9 l9.7 -9.7 M445.20 285.9 l9.7 -9.7 M448.90 285.9 l9.7 -9.7 M452.60 285.9 l9.7 -9.7 M456.30 285.9 l9.7 -9.7 M460.00 285.9 l9.7 -9.7 M463.70 285.9 l9.7 -9.7 M467.40 285.9 l9.7 -9.7 M471.10 285.9 l9.7 -9.7 M474.80 285.9 l9.7 -9.7 M478.50 285.9 l9.7 -9.7 M482.20 285.9 l9.7 -9.7 M485.90 285.9 l9.7 -9.7 M489.60 285.9 l9.7 -9.7 M493.30 285.9 l9.7 -9.7 M497.00 285.9 l9.7 -9.7 M500.70 285.9 l9.7 -9.7 M504.40 285.9 l9.7 -9.7 M508.10 285.9 l9.7 -9.7 M511.80 285.9 l9.7 -9.7 M515.50 285.9 l9.7 -9.7 M519.20 285.9 l9.7 -9.7 M522.90 285.9 l9.7 -9.7 M526.60 285.9 l9.7 -9.7 M530.30 285.9 l9.7 -9.7 M534.00 285.9 l9.7 -9.7 M537.70 285.9 l9.7 -9.7 M541.40 285.9 l9.7 -9.7 M545.10 285.9 l9.7 -9.7 M548.80 285.9 l9.7 -9.7 M552.50 285.9 l9.7 -9.7 M556.20 285.9 l9.7 -9.7 M559.90 285.9 l9.7 -9.7 M563.60 285.9 l9.7 -9.7 M567.30 285.9 l9.7 -9.7 M571.00 285.9 l9.7 -9.7 M574.70 285.9 l9.7 -9.7 M578.40 285.9 l9.7 -9.7 M582.10 285.9 l9.7 -9.7" stroke="#f622e4" stroke-width="0.75" fill="none" opacity="0.62" clip-path="url(#hc1)"/>
<clipPath id="hc2"><path d="M410.5 285.4 L456 276.7 L582.0 276.7 L582.0 285.4Z"/></clipPath>
<path d="M400.80 276.2 l9.7 9.7 M404.50 276.2 l9.7 9.7 M408.20 276.2 l9.7 9.7 M411.90 276.2 l9.7 9.7 M415.60 276.2 l9.7 9.7 M419.30 276.2 l9.7 9.7 M423.00 276.2 l9.7 9.7 M426.70 276.2 l9.7 9.7 M430.40 276.2 l9.7 9.7 M434.10 276.2 l9.7 9.7 M437.80 276.2 l9.7 9.7 M441.50 276.2 l9.7 9.7 M445.20 276.2 l9.7 9.7 M448.90 276.2 l9.7 9.7 M452.60 276.2 l9.7 9.7 M456.30 276.2 l9.7 9.7 M460.00 276.2 l9.7 9.7 M463.70 276.2 l9.7 9.7 M467.40 276.2 l9.7 9.7 M471.10 276.2 l9.7 9.7 M474.80 276.2 l9.7 9.7 M478.50 276.2 l9.7 9.7 M482.20 276.2 l9.7 9.7 M485.90 276.2 l9.7 9.7 M489.60 276.2 l9.7 9.7 M493.30 276.2 l9.7 9.7 M497.00 276.2 l9.7 9.7 M500.70 276.2 l9.7 9.7 M504.40 276.2 l9.7 9.7 M508.10 276.2 l9.7 9.7 M511.80 276.2 l9.7 9.7 M515.50 276.2 l9.7 9.7 M519.20 276.2 l9.7 9.7 M522.90 276.2 l9.7 9.7 M526.60 276.2 l9.7 9.7 M530.30 276.2 l9.7 9.7 M534.00 276.2 l9.7 9.7 M537.70 276.2 l9.7 9.7 M541.40 276.2 l9.7 9.7 M545.10 276.2 l9.7 9.7 M548.80 276.2 l9.7 9.7 M552.50 276.2 l9.7 9.7 M556.20 276.2 l9.7 9.7 M559.90 276.2 l9.7 9.7 M563.60 276.2 l9.7 9.7 M567.30 276.2 l9.7 9.7 M571.00 276.2 l9.7 9.7 M574.70 276.2 l9.7 9.7 M578.40 276.2 l9.7 9.7 M582.10 276.2 l9.7 9.7" stroke="#f622e4" stroke-width="0.7" fill="none" opacity="0.3" clip-path="url(#hc2)"/>
<path d="M410.5 284.7 H582.0" stroke="#f622e4" stroke-width="0.9" fill="none" opacity="0.75" stroke-dasharray="1.4 0.9"/>
<clipPath id="hc3"><path d="M456 287.6 L582.0 287.6 L582.0 292.2 L456 292.2Z"/></clipPath>
<path d="M450.40 292.7 l5.6 -5.6 M454.10 292.7 l5.6 -5.6 M457.80 292.7 l5.6 -5.6 M461.50 292.7 l5.6 -5.6 M465.20 292.7 l5.6 -5.6 M468.90 292.7 l5.6 -5.6 M472.60 292.7 l5.6 -5.6 M476.30 292.7 l5.6 -5.6 M480.00 292.7 l5.6 -5.6 M483.70 292.7 l5.6 -5.6 M487.40 292.7 l5.6 -5.6 M491.10 292.7 l5.6 -5.6 M494.80 292.7 l5.6 -5.6 M498.50 292.7 l5.6 -5.6 M502.20 292.7 l5.6 -5.6 M505.90 292.7 l5.6 -5.6 M509.60 292.7 l5.6 -5.6 M513.30 292.7 l5.6 -5.6 M517.00 292.7 l5.6 -5.6 M520.70 292.7 l5.6 -5.6 M524.40 292.7 l5.6 -5.6 M528.10 292.7 l5.6 -5.6 M531.80 292.7 l5.6 -5.6 M535.50 292.7 l5.6 -5.6 M539.20 292.7 l5.6 -5.6 M542.90 292.7 l5.6 -5.6 M546.60 292.7 l5.6 -5.6 M550.30 292.7 l5.6 -5.6 M554.00 292.7 l5.6 -5.6 M557.70 292.7 l5.6 -5.6 M561.40 292.7 l5.6 -5.6 M565.10 292.7 l5.6 -5.6 M568.80 292.7 l5.6 -5.6 M572.50 292.7 l5.6 -5.6 M576.20 292.7 l5.6 -5.6 M579.90 292.7 l5.6 -5.6" stroke="#f622e4" stroke-width="0.75" fill="none" opacity="0.6" clip-path="url(#hc3)"/>
<clipPath id="hc4"><path d="M456 287.6 L582.0 287.6 L582.0 292.2 L456 292.2Z"/></clipPath>
<path d="M450.40 287.1 l5.6 5.6 M454.10 287.1 l5.6 5.6 M457.80 287.1 l5.6 5.6 M461.50 287.1 l5.6 5.6 M465.20 287.1 l5.6 5.6 M468.90 287.1 l5.6 5.6 M472.60 287.1 l5.6 5.6 M476.30 287.1 l5.6 5.6 M480.00 287.1 l5.6 5.6 M483.70 287.1 l5.6 5.6 M487.40 287.1 l5.6 5.6 M491.10 287.1 l5.6 5.6 M494.80 287.1 l5.6 5.6 M498.50 287.1 l5.6 5.6 M502.20 287.1 l5.6 5.6 M505.90 287.1 l5.6 5.6 M509.60 287.1 l5.6 5.6 M513.30 287.1 l5.6 5.6 M517.00 287.1 l5.6 5.6 M520.70 287.1 l5.6 5.6 M524.40 287.1 l5.6 5.6 M528.10 287.1 l5.6 5.6 M531.80 287.1 l5.6 5.6 M535.50 287.1 l5.6 5.6 M539.20 287.1 l5.6 5.6 M542.90 287.1 l5.6 5.6 M546.60 287.1 l5.6 5.6 M550.30 287.1 l5.6 5.6 M554.00 287.1 l5.6 5.6 M557.70 287.1 l5.6 5.6 M561.40 287.1 l5.6 5.6 M565.10 287.1 l5.6 5.6 M568.80 287.1 l5.6 5.6 M572.50 287.1 l5.6 5.6 M576.20 287.1 l5.6 5.6 M579.90 287.1 l5.6 5.6" stroke="#f622e4" stroke-width="0.7" fill="none" opacity="0.3" clip-path="url(#hc4)"/>
<path d="M410.5 291.4 H582.0" stroke="#f622e4" stroke-width="1.0" fill="none" opacity="0.8" stroke-dasharray="1.4 0.9"/>
<path d="M525 288.4 H582.0" stroke="#f622e4" stroke-width="0.7" fill="none" opacity="0.6" stroke-dasharray="1.2 1.2"/>
<path d="M481.3 294.6 H582.0 M481.3 296.8 H582.0" stroke="#f622e4" stroke-width="1.3" fill="none" opacity="0.85" stroke-dasharray="2.2 0.5"/>
<path d="M510 302.3 H582.0 M510 304.6 H582.0" stroke="#f622e4" stroke-width="1.7" fill="none" opacity="0.92" stroke-dasharray="2.4 0.4"/>
<path d="M531.2 319.6 H582.0" stroke="#f622e4" stroke-width="0.9" fill="none" opacity="0.85" stroke-dasharray="1.2 0.8"/>
<path d="M538.7 321.8 H582.0 M538.7 324.1 H582.0 M538.7 326.4 H582.0" stroke="#f622e4" stroke-width="1.7" fill="none" opacity="0.92" stroke-dasharray="2.6 0.7"/>
<path d="M545.6 330.6 H582.0 M545.6 334 H582.0 M545.6 337.7 H582.0" stroke="#f622e4" stroke-width="1.4" fill="none" opacity="0.7" stroke-dasharray="1.1 0.9"/>
<path d="M553 346.8 H582.0" stroke="#f622e4" stroke-width="1.6" fill="none" opacity="0.75" stroke-dasharray="1.1 0.9"/>
<path d="M567.5 351 H582.0" stroke="#f622e4" stroke-width="1.2" fill="none" opacity="0.9" stroke-dasharray="1.4 0.5"/>
<path d="M123.0 261.4 H266.4" stroke="#f5a623" stroke-width="0.9"/>
<path d="M266.5 97.0 V382.3" stroke="#18e018" stroke-width="1"/>
<path d="M706.78 104.04 L674.39 104.60 L646.46 105.16 L622.14 105.73 L600.77 106.29 L581.84 106.85 L564.95 107.42 L549.80 107.98 L536.13 108.54 L523.73 109.10 L512.43 109.67 L502.09 110.23 L492.60 110.79 L483.85 111.36 L475.77 111.92 L468.27 112.48 L461.30 113.05 L454.80 113.61 L448.72 114.17 L443.03 114.73 L437.67 115.30 L432.62 115.86 L427.87 116.42 L423.38 116.99 L419.13 117.55 L415.11 118.11 L411.29 118.68 L407.67 119.24 L404.23 119.80 L400.96 120.36 L397.84 120.93 L394.87 121.49 L392.03 122.05 L389.33 122.62 L386.74 123.18 L384.27 123.74 L381.90 124.31 L379.63 124.87 L377.46 125.43 L375.38 125.99 L373.38 126.56 L371.45 127.12 L369.61 127.68 L367.84 128.25 L366.13 128.81 L364.49 129.37 L362.91 129.94 L361.38 130.50 L359.92 131.06 L358.50 131.62 L357.12 132.19 L355.79 132.75 L354.50 133.31 L353.24 133.88 L352.03 134.44 L350.85 135.00 L349.71 135.57 L348.60 136.13 L347.52 136.69 L346.47 137.25 L345.46 137.82 L344.47 138.38 L343.51 138.94 L342.58 139.51 L341.68 140.07 L340.80 140.63 L339.94 141.20 L339.11 141.76 L338.30 142.32 L337.52 142.88 L336.75 143.45 L336.01 144.01 L335.28 144.57 L334.58 145.14 L333.89 145.70 L333.23 146.26 L332.58 146.83 L331.95 147.39 L331.33 147.95 L330.73 148.51 L330.15 149.08 L329.59 149.64 L329.04 150.20 L328.50 150.77 L327.98 151.33 L327.47 151.89 L326.97 152.46 L326.48 153.02 L326.24 153.30 L323.97 156.12 L321.89 158.93 L319.95 161.75 L318.12 164.56 L316.38 167.38 L314.75 170.19 L313.22 173.00 L311.78 175.82 L310.43 178.63 L309.14 181.45 L307.93 184.26 L306.78 187.08 L305.69 189.90 L304.66 192.71 L303.67 195.53 L302.73 198.34 L301.83 201.16 L300.98 203.97 L300.16 206.79 L299.37 209.60 L298.62 212.42 L297.91 215.23 L297.23 218.05 L296.57 220.86 L295.95 223.68 L295.34 226.49 L294.77 229.31 L294.21 232.12 L293.68 234.94 L293.18 237.75 L292.69 240.56 L292.21 243.38 L291.76 246.20 L291.32 249.01 L290.89 251.83 L290.48 254.64 L290.08 257.46 L289.69 260.27 L289.31 263.09 L288.94 265.90 L288.59 268.72 L288.25 271.53 L287.91 274.35 L287.58 277.16 L287.25 279.98 L286.93 282.79 L286.60 285.61 L286.27 288.42 L285.95 291.24 L285.63 294.05 L285.32 296.87 L285.02 299.68 L284.72 302.50 L284.43 305.31 L284.15 308.12 L283.87 310.94 L283.61 313.75 L283.35 316.57 L283.10 319.38 L282.85 322.20 L282.61 325.01 L282.38 327.83 L282.15 330.64 L281.93 333.46 L281.72 336.27 L281.51 339.09 L281.31 341.90 L281.11 344.72 L280.92 347.54 L280.74 350.35 L280.56 353.17 L280.38 355.98 L280.21 358.80 L280.04 361.61 L279.87 364.43 L279.71 367.24 L279.56 370.06 L279.40 372.87 L279.25 375.69 L279.11 378.50 L278.96 381.31 L278.92 382.19" fill="none" stroke="#1c1c9c" stroke-width="1.25" stroke-linejoin="round" clip-path="url(#plotclip)"/>
<path d="M582 109.6 L546.7 114.0 L520 117.4 L500 120.0 L489.6 121.6 L470 125.4 L456 129 L444.4 133 L437 137.6 L432 142.6 L428.6 147.4 L427 153 L424.4 164 L421.4 175 L418.6 190 L416 203 L412 236 L408 283 L403.7 315 L398 363 L396.4 377.4 L397 379.4 L401 382.2" fill="none" stroke="#f02424" stroke-width="1.05" stroke-linejoin="round"/>
<rect x="123.0" y="97.0" width="459.0" height="285.3" fill="none" stroke="#222" stroke-width="1.15"/>
<path d="M123.4 104.6 l2.6 3 h-2.6z" fill="#000"/><path d="M123.2 272.2 l2.6 2.8 l-2.6 0.6z" fill="#000"/>
<rect x="150.8" y="157" width="45.2" height="51.6" fill="#ffffe1" stroke="#a8a8a8" stroke-width="0.5"/>
<rect x="150.8" y="157" width="45.2" height="4.6" fill="#000"/>
<path d="M155.8 166.2 H164.2" stroke="#f02424" stroke-width="1.0"/>
<text x="166" y="168.0" font-size="5" fill="#333">ECD</text>
<path d="M155.8 173.1 H164.2" stroke="#18e018" stroke-width="1.0"/>
<text x="166" y="174.9" font-size="5" fill="#333">Den Ann</text>
<path d="M155.8 179.9 H164.2" stroke="#f5a623" stroke-width="1.0"/>
<text x="166" y="181.7" font-size="5" fill="#333">Den Pipe</text>
<path d="M155.8 186.8 H164.2" stroke="#1c1c9c" stroke-width="1.3"/>
<text x="166" y="188.6" font-size="5" fill="#333">EMW</text>
<path d="M155.8 193.6 H164.2" stroke="#1a8a1a" stroke-width="0.9" stroke-dasharray="2.2 0.9"/>
<text x="166" y="195.4" font-size="5" fill="#333">PP</text>
<path d="M155.8 200.5 H164.2" stroke="#f418e0" stroke-width="0.9" stroke-dasharray="2.2 0.9"/>
<text x="166" y="202.3" font-size="5" fill="#333">FP</text>
<rect x="-10" y="394.8" width="620" height="15.2" fill="#f0f0f0"/>
<rect x="0" y="394.8" width="600" height="0.4" fill="#dcdcdc"/>
<text x="1.5" y="401.9" font-size="6.2" fill="#222" textLength="14.8" lengthAdjust="spacingAndGlyphs">Status:</text>
<circle cx="23" cy="400" r="3.9" fill="#58c850" stroke="#3aa03a" stroke-width="0.5"/>
<text x="28.5" y="401.9" font-size="6.2" fill="#333" textLength="7.4" lengthAdjust="spacingAndGlyphs">OK</text>
<text x="180.6" y="402.3" font-size="6.2" fill="#333" textLength="21.5" lengthAdjust="spacingAndGlyphs">Database</text>
<rect x="205.8" y="396.4" width="5.4" height="5" rx="1" fill="#c8d4e4" stroke="#7a8aa4" stroke-width="0.4"/>
<text x="555.4" y="402.3" font-size="6.2" fill="#333" textLength="37" lengthAdjust="spacingAndGlyphs">Version 1.0.1.55</text></g></svg></body></html>
